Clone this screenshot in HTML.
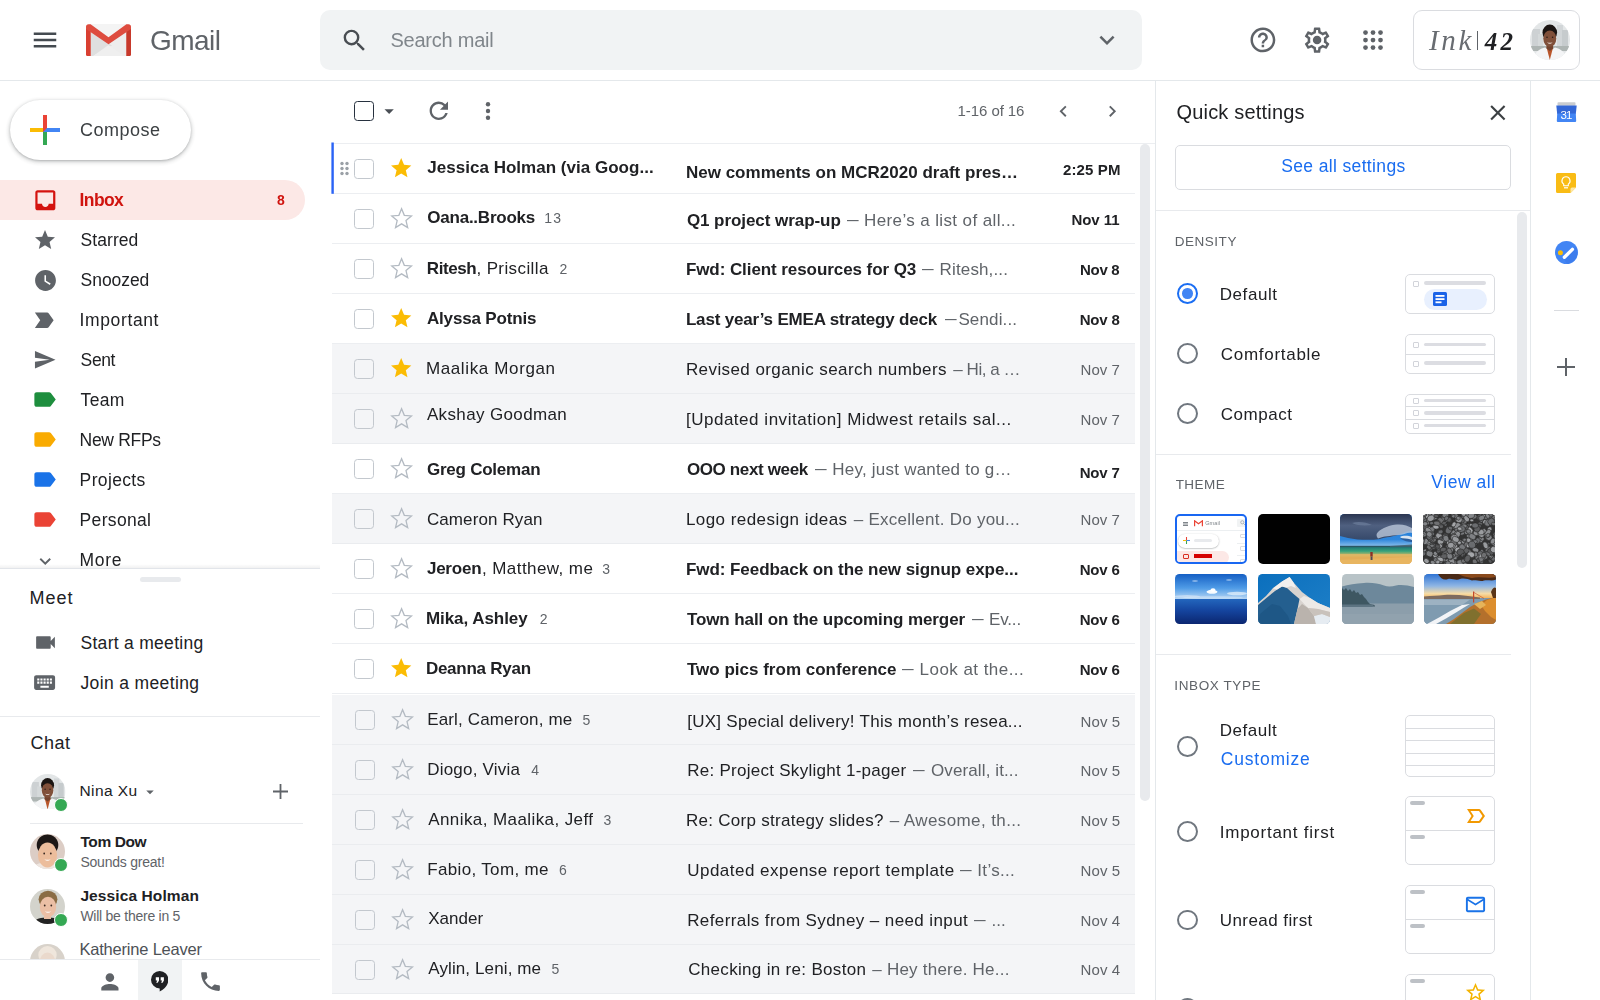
<!DOCTYPE html>
<html lang="en"><head><meta charset="utf-8"><title>Gmail</title>
<style>
*{box-sizing:border-box;margin:0;padding:0}
html,body{width:1600px;height:1000px;overflow:hidden;background:#fff;font-family:"Liberation Sans",sans-serif;}
#app{opacity:.999;position:relative;width:1600px;height:1000px;overflow:hidden}
#app div,#app svg,#app span.t{position:absolute}
#app div span{position:static}
#app>header,#app>nav,#app>main,#app>aside{position:absolute;left:0;top:0;width:0;height:0}
.t{white-space:nowrap;display:block}
</style></head>
<body><div id="app">
<header>
<div style="left:0px;top:80px;width:1600px;height:1px;background:#e4e8eb"></div>
<svg style="left:30px;top:25px" width="30" height="30" viewBox="0 0 24 24" fill="#444a50"><path d="M3 18h18v-2H3v2zm0-5h18v-2H3v2zm0-7v2h18V6H3z"/></svg>
<svg style="left:86.250px;top:23.750px" width="45" height="32.500" viewBox="0 0 45 32.500">
<rect x="1" y=".4" width="43" height="31.700" rx="1.500" fill="#ededed"/>
<path d="M3 .4H42L22.500 13.600z" fill="#f4f4f4"/>
<path d="M4.700 8.200L26 21.500L7 32.100H4.700z" fill="#dfdfdf"/>
<path d="M7 32.100L22.500 21L38 32.100z" fill="#efefef"/>
<path d="M0 3.500H4.750V32.350H2A2 2 0 0 1 0 30.350z" fill="#d93f31"/>
<path d="M45 3.500H40.250V32.350H43A2 2 0 0 0 45 30.350z" fill="#c7392b"/>
<path d="M0 2.800Q0 .2 2.600 .2L4.600 .2L22.500 13.200L40.400 .2L42.400 .2Q45 .2 45 2.800L45 5.100L22.500 20.200L0 5.100z" fill="#de4c3f"/>
</svg>
<span class="t" style="top:27.00px;font-size:28px;line-height:28px;color:#5f6368;letter-spacing:-0.574px;left:150.10px;">Gmail</span>
<div style="left:320px;top:10px;width:822px;height:60px;background:#f1f3f4;border-radius:10px"></div>
<svg style="left:340.35px;top:25.55px" width="29.1" height="29.1" viewBox="0 0 24 24" fill="#494d52"><path d="M15.5 14h-.79l-.28-.27A6.471 6.471 0 0 0 16 9.5 6.5 6.5 0 1 0 9.500 16c1.61 0 3.09-.59 4.23-1.57l.27.28v.79l5 4.99L20.49 19l-4.99-5zm-6 0C7.01 14 5 11.99 5 9.5S7.01 5 9.5 5 14 7.01 14 9.5 11.990 14 9.500 14z"/></svg>
<span class="t" style="top:30.00px;font-size:20px;line-height:20px;color:#80868b;letter-spacing:-0.240px;left:390.50px;">Search mail</span>
<svg style="left:1092px;top:25px" width="30" height="30" viewBox="0 0 24 24" fill="#5f6368"><path d="M16.590 8.590L12 13.170 7.410 8.590 6 10l6 6 6-6z"/></svg>
<svg style="left:1247.5px;top:25.25px" width="29.8" height="29.8" viewBox="0 0 24 24" fill="#5f6368"><path d="M11 18h2v-2h-2v2zm1-16C6.48 2 2 6.48 2 12s4.48 10 10 10 10-4.48 10-10S17.52 2 12 2zm0 18c-4.41 0-8-3.59-8-8s3.59-8 8-8 8 3.59 8 8-3.59 8-8 8zm0-14c-2.21 0-4 1.79-4 4h2c0-1.1.9-2 2-2s2 .9 2 2c0 2-3 1.750-3 5h2c0-2.250 3-2.500 3-5 0-2.210-1.790-4-4-4z"/></svg>
<svg style="left:1302.3px;top:24.8px" width="30.2" height="30.2" viewBox="0 0 24 24" fill="#5f6368"><path d="M19.43 12.98c.04-.32.07-.64.07-.98 0-.34-.03-.66-.07-.98l2.110-1.650c.19-.15.24-.42.12-.64l-2-3.460a.5.5 0 0 0-.61-.22l-2.490 1c-.52-.4-1.080-.73-1.690-.98l-.38-2.650A.488.488 0 0 0 14 2h-4c-.25 0-.46.18-.49.42l-.38 2.650c-.61.25-1.170.59-1.690.98l-2.490-1a.566.566 0 0 0-.18-.03c-.17 0-.34.09-.43.25l-2 3.460c-.13.22-.07.49.12.64l2.110 1.650c-.04.32-.07.65-.07.98 0 .33.03.66.07.98l-2.110 1.650c-.19.15-.24.42-.12.64l2 3.460a.5.5 0 0 0 .61.22l2.490-1c.52.4 1.080.73 1.690.98l.38 2.650c.03.24.24.42.49.42h4c.25 0 .46-.18.49-.42l.38-2.650c.61-.25 1.170-.59 1.690-.98l2.490 1c.06.02.12.03.18.03.17 0 .34-.09.43-.25l2-3.460c.12-.22.07-.49-.12-.64l-2.110-1.650zm-1.980-1.710c.04.31.05.52.05.73 0 .21-.02.43-.05.73l-.14 1.130.89.7 1.080.84-.7 1.210-1.270-.51-1.040-.42-.9.68c-.43.32-.84.56-1.250.73l-1.060.43-.16 1.130-.2 1.350h-1.400l-.19-1.350-.16-1.130-1.060-.43c-.43-.18-.83-.41-1.230-.71l-.91-.7-1.060.43-1.270.51-.7-1.210 1.080-.84.89-.7-.14-1.130c-.03-.31-.05-.54-.05-.74s.02-.43.05-.73l.14-1.130-.89-.7-1.080-.84.7-1.210 1.270.51 1.040.42.9-.68c.43-.32.84-.56 1.250-.73l1.060-.43.16-1.130.2-1.350h1.390l.19 1.350.16 1.130 1.060.43c.43.18.83.41 1.230.71l.91.7 1.060-.43 1.270-.51.7 1.210-1.070.85-.89.7.14 1.130zM12 8.600a3.400 3.400 0 1 0 0 6.800a3.400 3.400 0 1 0 0-6.800z"/></svg>
<svg style="left:1357.500px;top:25px" width="30" height="30" viewBox="0 0 24 24" fill="#5f6368"><circle cx="6" cy="6" r="1.9"/><circle cx="6" cy="12" r="1.9"/><circle cx="6" cy="18" r="1.9"/><circle cx="12" cy="6" r="1.9"/><circle cx="12" cy="12" r="1.9"/><circle cx="12" cy="18" r="1.9"/><circle cx="18" cy="6" r="1.9"/><circle cx="18" cy="12" r="1.9"/><circle cx="18" cy="18" r="1.9"/></svg>
<div style="left:1413px;top:10px;width:167px;height:60px;border:1px solid #dadce0;border-radius:9px;background:#fff"></div>
<span class="t" style="top:26.00px;font-size:29px;line-height:29px;color:#686c71;letter-spacing:2.621px;left:1429.00px;font-family:'Liberation Serif',serif;"><i>Ink</i></span>
<div style="left:1477px;top:31px;width:1px;height:18.5px;background:#5f6368"></div>
<span class="t" style="top:29.00px;font-size:25px;line-height:25px;color:#202124;font-weight:700;letter-spacing:3.200px;left:1484.70px;font-family:'Liberation Serif',serif;"><i>42</i></span>
<svg style="left:1529.9px;top:20.1px" width="40" height="40" viewBox="0 0 40 40"><defs><clipPath id="cn1549"><circle cx="20" cy="20" r="20"/></clipPath></defs>
<g clip-path="url(#cn1549)"><rect width="40" height="40" fill="#e3e6e7"/><rect x="2" y="9" width="8" height="20" fill="#cdd1d3"/><rect x="8" y="14" width="5" height="15" fill="#d5d9da"/><rect x="27" y="5" width="6" height="24" fill="#d2d6d8"/><rect x="32" y="10" width="6" height="19" fill="#c6cbcd"/><rect x="0" y="26" width="40" height="5" fill="#aeb5b3"/>
<path d="M3 41C4 31 11 28.500 15 27.500L20 31L25 27.500C29 28.500 36 31 37 41z" fill="#f4f5f6"/><path d="M16.500 27L19.800 40L23.200 27z" fill="#b9562b"/><path d="M16.500 24h6.600v4.500l-3.300 2.500l-3.300-2.500z" fill="#74432e"/>
<ellipse cx="19.800" cy="12.600" rx="7.300" ry="8" fill="#1b1513"/><ellipse cx="19.800" cy="18.600" rx="6.500" ry="8.200" fill="#80503a"/>
<path d="M17 22.200Q19.800 25.200 22.600 22.200Q19.800 23.200 17 22.200z" fill="#f3e9e4"/><circle cx="17" cy="17.200" r=".8" fill="#2a1a14"/><circle cx="22.600" cy="17.200" r=".8" fill="#2a1a14"/></g></svg>
</header>
<nav>
<div style="left:10px;top:100px;width:181px;height:60px;border-radius:30px;background:#fff;box-shadow:0 1px 2.500px 0 rgba(60,64,67,.3),0 1.500px 4px 1.500px rgba(60,64,67,.15)"></div>
<svg style="left:30px;top:115px" width="30" height="30" viewBox="0 0 30 30"><rect x="13" y="0" width="4" height="15" fill="#ea4335"/><rect x="13" y="15" width="4" height="15" fill="#34a853"/><rect x="0" y="13" width="15" height="4" fill="#fbbc04"/><rect x="15" y="13" width="15" height="4" fill="#4285f4"/><path d="M13 13h4v4h-4z" fill="#4285f4"/><path d="M13 13 L17 13 L13 17z" fill="#ea4335"/></svg>
<span class="t" style="top:121.00px;font-size:18px;line-height:18px;color:#3c4043;letter-spacing:0.496px;left:80.00px;">Compose</span>
<div style="left:0px;top:180px;width:305px;height:40px;background:#fce8e6;border-radius:0 20px 20px 0"></div>
<svg style="left:31.65px;top:186.65px" width="26.7" height="26.7" viewBox="0 0 24 24" fill="#d4130f"><path d="M19 3H4.990c-1.110 0-1.980.89-1.980 2L3 19c0 1.100.88 2 1.990 2H19c1.100 0 2-.9 2-2V5c0-1.110-.9-2-2-2zm0 12h-4c0 1.660-1.350 3-3 3s-3-1.340-3-3H4.990V5H19v10z"/></svg>
<span class="t" style="top:192.00px;font-size:17.5px;line-height:17.5px;color:#d0140f;font-weight:700;letter-spacing:-0.633px;left:79.60px;">Inbox</span>
<span class="t" style="top:193.00px;font-size:14px;line-height:14px;color:#d0140f;font-weight:700;left:277.00px;">8</span>
<svg style="left:33px;top:227.5px" width="24" height="24" viewBox="0 0 24 24" fill="#5f6368"><path d="M12 17.270L18.180 21l-1.640-7.030L22 9.240l-7.190-.61L12 2 9.190 8.630 2 9.240l5.460 4.730L5.820 21z"/></svg>
<span class="t" style="top:232.00px;font-size:17.5px;line-height:17.5px;color:#202124;letter-spacing:0.057px;left:80.60px;">Starred</span>
<svg style="left:32.5px;top:267.5px" width="25" height="25" viewBox="0 0 24 24" fill="#5f6368"><path d="M12 2C6.500 2 2 6.500 2 12s4.500 10 10 10 10-4.500 10-10S17.500 2 12 2zm4.200 14.200L11 13V7h1.500v5.200l4.500 2.700-.8 1.300z"/></svg>
<span class="t" style="top:272.00px;font-size:17.5px;line-height:17.5px;color:#202124;letter-spacing:-0.059px;left:80.60px;">Snoozed</span>
<svg style="left:31.45px;top:306.75px" width="26.5" height="26.5" viewBox="0 0 24 24" fill="#5f6368"><path d="M3.500 18.990l11 .01c.67 0 1.270-.33 1.630-.84L20.500 12l-4.370-6.160c-.36-.51-.96-.84-1.630-.84l-11 .01L8.340 12 3.500 18.990z"/></svg>
<span class="t" style="top:312.00px;font-size:17.5px;line-height:17.5px;color:#202124;letter-spacing:0.617px;left:79.60px;">Important</span>
<svg style="left:32.95px;top:348.25px" width="23.5" height="23.5" viewBox="0 0 24 24" fill="#5f6368"><path d="M2.010 21L23 12 2.010 3 2 10l15 2-15 2z"/></svg>
<span class="t" style="top:352.00px;font-size:17.5px;line-height:17.5px;color:#202124;letter-spacing:-0.379px;left:80.60px;">Sent</span>
<svg style="left:31.200px;top:386.5px" width="27" height="25" viewBox="0 0 24 24" preserveAspectRatio="none" fill="#1e8e3e"><path d="M17.630 5.840C17.270 5.330 16.670 5 16 5L5 5.010C3.900 5.010 3 5.900 3 7v10c0 1.100.9 1.990 2 1.990L16 19c.67 0 1.270-.33 1.630-.84L22 12l-4.370-6.160z"/></svg>
<span class="t" style="top:392.00px;font-size:17.5px;line-height:17.5px;color:#202124;letter-spacing:0.345px;left:80.60px;">Team</span>
<svg style="left:31.200px;top:426.5px" width="27" height="25" viewBox="0 0 24 24" preserveAspectRatio="none" fill="#f9ab00"><path d="M17.630 5.840C17.270 5.330 16.670 5 16 5L5 5.010C3.900 5.010 3 5.900 3 7v10c0 1.100.9 1.990 2 1.990L16 19c.67 0 1.270-.33 1.630-.84L22 12l-4.370-6.160z"/></svg>
<span class="t" style="top:432.00px;font-size:17.5px;line-height:17.5px;color:#202124;letter-spacing:-0.303px;left:79.60px;">New RFPs</span>
<svg style="left:31.200px;top:466.5px" width="27" height="25" viewBox="0 0 24 24" preserveAspectRatio="none" fill="#1a73e8"><path d="M17.630 5.840C17.270 5.330 16.670 5 16 5L5 5.010C3.900 5.010 3 5.900 3 7v10c0 1.100.9 1.990 2 1.990L16 19c.67 0 1.270-.33 1.630-.84L22 12l-4.370-6.160z"/></svg>
<span class="t" style="top:472.00px;font-size:17.5px;line-height:17.5px;color:#202124;letter-spacing:0.362px;left:79.60px;">Projects</span>
<svg style="left:31.200px;top:506.5px" width="27" height="25" viewBox="0 0 24 24" preserveAspectRatio="none" fill="#ea4335"><path d="M17.630 5.840C17.270 5.330 16.670 5 16 5L5 5.010C3.900 5.010 3 5.900 3 7v10c0 1.100.9 1.990 2 1.990L16 19c.67 0 1.270-.33 1.630-.84L22 12l-4.370-6.160z"/></svg>
<span class="t" style="top:512.00px;font-size:17.5px;line-height:17.5px;color:#202124;letter-spacing:0.331px;left:79.60px;">Personal</span>
<svg style="left:34.35px;top:550px" width="22.5" height="22.5" viewBox="0 0 24 24" fill="#5f6368"><path d="M16.590 8.590L12 13.170 7.410 8.590 6 10l6 6 6-6z"/></svg>
<span class="t" style="top:552.00px;font-size:17.5px;line-height:17.5px;color:#202124;letter-spacing:0.704px;left:79.50px;">More</span>
<div style="left:0px;top:564px;width:320px;height:4px;background:linear-gradient(to bottom,rgba(60,64,67,0),rgba(60,64,67,.07))"></div>
<div style="left:0px;top:568px;width:320px;height:432px;background:#fff;border-top:1px solid #e2e5ea"></div>
<div style="left:140px;top:576.5px;width:41px;height:5px;background:#e8eaed;border-radius:2.500px"></div>
<span class="t" style="top:589.00px;font-size:18px;line-height:18px;color:#202124;letter-spacing:0.995px;left:29.50px;">Meet</span>
<svg style="left:32.6px;top:630px" width="25" height="25" viewBox="0 0 24 24" fill="#5f6368"><path d="M17 10.500V7c0-.55-.45-1-1-1H4c-.55 0-1 .45-1 1v10c0 .55.45 1 1 1h12c.55 0 1-.45 1-1v-3.500l4 4v-11l-4 4z"/></svg>
<span class="t" style="top:635.00px;font-size:17.5px;line-height:17.5px;color:#202124;letter-spacing:0.290px;left:80.50px;">Start a meeting</span>
<svg style="left:32.4px;top:669.65px" width="25.2" height="25.2" viewBox="0 0 24 24" fill="#5f6368"><path d="M20 5H4c-1.100 0-1.990.9-1.990 2L2 17c0 1.100.9 2 2 2h16c1.100 0 2-.9 2-2V7c0-1.100-.9-2-2-2zm-9 3h2v2h-2V8zm0 3h2v2h-2v-2zM8 8h2v2H8V8zm0 3h2v2H8v-2zm-1 2H5v-2h2v2zm0-3H5V8h2v2zm9 7H8v-2h8v2zm0-4h-2v-2h2v2zm0-3h-2V8h2v2zm3 3h-2v-2h2v2zm0-3h-2V8h2v2z"/></svg>
<span class="t" style="top:675.00px;font-size:17.5px;line-height:17.5px;color:#202124;letter-spacing:0.359px;left:80.50px;">Join a meeting</span>
<div style="left:0px;top:716px;width:320px;height:1px;background:#e8eaed"></div>
<span class="t" style="top:734.00px;font-size:18px;line-height:18px;color:#202124;letter-spacing:0.493px;left:30.50px;">Chat</span>
<svg style="left:30.0px;top:773.75px" width="35.5" height="35.5" viewBox="0 0 40 40"><defs><clipPath id="cn47"><circle cx="20" cy="20" r="20"/></clipPath></defs>
<g clip-path="url(#cn47)"><rect width="40" height="40" fill="#e3e6e7"/><rect x="2" y="9" width="8" height="20" fill="#cdd1d3"/><rect x="8" y="14" width="5" height="15" fill="#d5d9da"/><rect x="27" y="5" width="6" height="24" fill="#d2d6d8"/><rect x="32" y="10" width="6" height="19" fill="#c6cbcd"/><rect x="0" y="26" width="40" height="5" fill="#aeb5b3"/>
<path d="M3 41C4 31 11 28.500 15 27.500L20 31L25 27.500C29 28.500 36 31 37 41z" fill="#f4f5f6"/><path d="M16.500 27L19.800 40L23.200 27z" fill="#b9562b"/><path d="M16.500 24h6.600v4.500l-3.300 2.500l-3.300-2.500z" fill="#74432e"/>
<ellipse cx="19.800" cy="12.600" rx="7.300" ry="8" fill="#1b1513"/><ellipse cx="19.800" cy="18.600" rx="6.500" ry="8.200" fill="#80503a"/>
<path d="M17 22.200Q19.800 25.200 22.600 22.200Q19.800 23.200 17 22.200z" fill="#f3e9e4"/><circle cx="17" cy="17.200" r=".8" fill="#2a1a14"/><circle cx="22.600" cy="17.200" r=".8" fill="#2a1a14"/></g></svg>
<div style="left:54.2px;top:798px;width:14px;height:14px;border-radius:50%;background:#34a853;border:1px solid #fff"></div>
<span class="t" style="top:783.00px;font-size:15.5px;line-height:15.5px;color:#202124;letter-spacing:0.413px;left:79.50px;">Nina Xu</span>
<svg style="left:141px;top:782.5px" width="18" height="18" viewBox="0 0 24 24" fill="#5f6368"><path d="M7 10l5 5 5-5z"/></svg>
<svg style="left:272.500px;top:784px" width="15" height="15" viewBox="0 0 15 15"><path d="M6.600 0h1.800v6.600H15v1.800H8.400V15H6.600V8.400H0V6.600h6.600z" fill="#5f6368"/></svg>
<div style="left:30px;top:822.5px;width:272.5px;height:1px;background:#e8eaed"></div>
<svg style="left:30.0px;top:833.6px" width="35.0" height="35.0" viewBox="0 0 35 35"><defs><clipPath id="avT"><circle cx="17.500" cy="17.500" r="17.500"/></clipPath></defs>
<g clip-path="url(#avT)"><rect width="35" height="35" fill="#dccdc5"/><path d="M2 37C4 29 11 28.500 17.500 28.500C24 28.500 31 29 33 37z" fill="#efe6e0"/><rect x="14" y="24" width="7" height="6" fill="#ecbd9c"/>
<ellipse cx="17.5" cy="11.0" rx="10.799999999999999" ry="10.625" fill="#1c1715"/><ellipse cx="17.5" cy="21" rx="9.6" ry="12.5" fill="#ecbd9c"/>
<circle cx="14.2" cy="19.5" r=".9" fill="#3a2a22"/><circle cx="20.8" cy="19.5" r=".9" fill="#3a2a22"/><path d="M14.3 25.2Q17.5 28.5 20.7 25.2Q17.5 26.5 14.3 25.2z" fill="#fff"/></g></svg>
<div style="left:54.2px;top:858px;width:14px;height:14px;border-radius:50%;background:#34a853;border:1px solid #fff"></div>
<span class="t" style="top:834.00px;font-size:15.5px;line-height:15.5px;color:#202124;font-weight:700;letter-spacing:-0.389px;left:80.40px;">Tom Dow</span>
<span class="t" style="top:855.00px;font-size:14px;line-height:14px;color:#5f6368;letter-spacing:-0.224px;left:80.40px;">Sounds great!</span>
<svg style="left:30.0px;top:889.0px" width="35.0" height="35.0" viewBox="0 0 35 35"><defs><clipPath id="avJ"><circle cx="17.500" cy="17.500" r="17.500"/></clipPath></defs>
<g clip-path="url(#avJ)"><rect width="35" height="35" fill="#d3d3cc"/><path d="M2 37C4 29 11 28.500 17.500 28.500C24 28.500 31 29 33 37z" fill="#232323"/><rect x="14" y="24" width="7" height="6" fill="#ebbfa5"/>
<ellipse cx="18" cy="10.3" rx="9.399999999999999" ry="8.67" fill="#8a6c44"/><ellipse cx="18" cy="18" rx="8.2" ry="10.2" fill="#ebbfa5"/>
<circle cx="14.7" cy="16.5" r=".9" fill="#3a2a22"/><circle cx="21.3" cy="16.5" r=".9" fill="#3a2a22"/><path d="M14.8 22.2Q18 25.5 21.2 22.2Q18 23.5 14.8 22.2z" fill="#fff"/></g></svg>
<div style="left:54.2px;top:912.8px;width:14px;height:14px;border-radius:50%;background:#34a853;border:1px solid #fff"></div>
<span class="t" style="top:888.00px;font-size:15.5px;line-height:15.5px;color:#202124;font-weight:700;letter-spacing:0.100px;left:80.40px;">Jessica Holman</span>
<span class="t" style="top:909.00px;font-size:14px;line-height:14px;color:#5f6368;letter-spacing:-0.252px;left:80.40px;">Will be there in 5</span>
<svg style="left:30.0px;top:944.0px" width="35.0" height="35.0" viewBox="0 0 35 35"><defs><clipPath id="avK"><circle cx="17.500" cy="17.500" r="17.500"/></clipPath></defs>
<g clip-path="url(#avK)"><rect width="35" height="35" fill="#d8d2ca"/><path d="M2 37C4 29 11 28.500 17.500 28.500C24 28.500 31 29 33 37z" fill="#d8d4cf"/><rect x="14" y="24" width="7" height="6" fill="#ead9cc"/>
<ellipse cx="17.5" cy="11.0" rx="9.2" ry="8.924999999999999" fill="#efe6dc"/><ellipse cx="17.5" cy="19" rx="8" ry="10.5" fill="#ead9cc"/>
<circle cx="14.2" cy="17.5" r=".9" fill="#3a2a22"/><circle cx="20.8" cy="17.5" r=".9" fill="#3a2a22"/><path d="M14.3 23.2Q17.5 26.5 20.7 23.2Q17.5 24.5 14.3 23.2z" fill="#fff"/></g></svg>
<span class="t" style="top:941.00px;font-size:16.5px;line-height:16.5px;color:#4d5156;letter-spacing:-0.198px;left:79.40px;">Katherine Leaver</span>
<div style="left:0px;top:959px;width:320px;height:41px;background:#fff;border-top:1px solid #e8eaed"></div>
<div style="left:137.6px;top:960px;width:44.4px;height:40px;background:#f1f3f4"></div>
<svg style="left:97.1px;top:968.6px" width="25.8" height="25.8" viewBox="0 0 24 24" fill="#5f6368"><path d="M12 12c2.210 0 4-1.790 4-4s-1.790-4-4-4-4 1.790-4 4 1.790 4 4 4zm0 2c-2.670 0-8 1.340-8 4v2h16v-2c0-2.660-5.330-4-8-4z"/></svg>
<svg style="left:151px;top:971.400px" width="17.400" height="20.600" viewBox="0 0 17.400 20.600"><path d="M8.700 0A8.700 8.700 0 0 0 0 8.700A8.700 8.700 0 0 0 8.700 17.400L8.700 20.600C13 18.600 17.400 14.500 17.400 8.700A8.700 8.700 0 0 0 8.700 0z" fill="#202124"/><path d="M4.800 6.200h3.200v3.200l-1.300 2.400h-1.500l1.100-2.400h-1.500z M9.700 6.200h3.200v3.200l-1.300 2.400h-1.500l1.100-2.400h-1.500z" fill="#fff"/></svg>
<svg style="left:197.5px;top:968.8px" width="25" height="25" viewBox="0 0 24 24" fill="#5f6368"><path d="M6.620 10.790c1.440 2.830 3.760 5.140 6.590 6.590l2.200-2.200c.27-.27.67-.36 1.020-.24 1.120.37 2.330.57 3.570.57.55 0 1 .45 1 1V20c0 .55-.45 1-1 1-9.390 0-17-7.610-17-17 0-.55.45-1 1-1h3.500c.55 0 1 .45 1 1 0 1.250.2 2.450.57 3.570.11.35.03.74-.25 1.020l-2.200 2.200z"/></svg>
</nav>
<main>
<div style="left:353.8px;top:101px;width:20px;height:20px;border:1.8px solid #27313f;border-radius:3.500px"></div>
<svg style="left:377.75px;top:100.1px" width="22.3" height="22.3" viewBox="0 0 24 24" fill="#4a4f55"><path d="M7 10l5 5 5-5z"/></svg>
<svg style="left:425.2px;top:97.45px" width="27.6" height="27.6" viewBox="0 0 24 24" fill="#5f6368"><path d="M17.65 6.35A7.958 7.958 0 0 0 12 4c-4.42 0-7.990 3.580-7.990 8s3.570 8 7.990 8c3.730 0 6.840-2.550 7.730-6h-2.080A5.990 5.990 0 0 1 12 18c-3.310 0-6-2.690-6-6s2.690-6 6-6c1.660 0 3.140.69 4.220 1.780L13 11h7V4l-2.350 2.350z"/></svg>
<svg style="left:476px;top:99.250px" width="24" height="24" viewBox="0 0 24 24" fill="#5f6368"><circle cx="12" cy="5.200" r="2.200"/><circle cx="12" cy="12" r="2.200"/><circle cx="12" cy="18.800" r="2.200"/></svg>
<span class="t" style="top:103.00px;font-size:15px;line-height:15px;color:#5f6368;letter-spacing:-0.079px;left:957.60px;">1-16 of 16</span>
<svg style="left:1051.6px;top:99.95px" width="22.6" height="22.6" viewBox="0 0 24 24" fill="#5f6368"><path d="M15.41 7.41L14 6l-6 6 6 6 1.410-1.410L10.830 12z"/></svg>
<svg style="left:1100.9px;top:99.95px" width="22.6" height="22.6" viewBox="0 0 24 24" fill="#5f6368"><path d="M10 6L8.590 7.410 13.170 12l-4.580 4.590L10 18l6-6z"/></svg>
<div style="left:1140px;top:144px;width:10px;height:657px;background:#e8eaed;border-radius:5px"></div>
<div style="left:332px;top:344px;width:803px;height:50px;background:#f4f5f7"></div>
<div style="left:332px;top:394px;width:803px;height:50px;background:#f4f5f7"></div>
<div style="left:332px;top:494px;width:803px;height:50px;background:#f4f5f7"></div>
<div style="left:332px;top:695px;width:803px;height:50px;background:#f4f5f7"></div>
<div style="left:332px;top:745px;width:803px;height:50px;background:#f4f5f7"></div>
<div style="left:332px;top:795px;width:803px;height:50px;background:#f4f5f7"></div>
<div style="left:332px;top:845px;width:803px;height:50px;background:#f4f5f7"></div>
<div style="left:332px;top:895px;width:803px;height:50px;background:#f4f5f7"></div>
<div style="left:332px;top:945px;width:803px;height:49px;background:#f4f5f7"></div>
<div style="left:332px;top:193px;width:803px;height:1px;background:#eceef1"></div>
<div style="left:332px;top:243px;width:803px;height:1px;background:#eceef1"></div>
<div style="left:332px;top:293px;width:803px;height:1px;background:#eceef1"></div>
<div style="left:332px;top:343px;width:803px;height:1px;background:#eceef1"></div>
<div style="left:332px;top:393px;width:803px;height:1px;background:#eaecef"></div>
<div style="left:332px;top:443px;width:803px;height:1px;background:#eaecef"></div>
<div style="left:332px;top:493px;width:803px;height:1px;background:#eceef1"></div>
<div style="left:332px;top:543px;width:803px;height:1px;background:#eaecef"></div>
<div style="left:332px;top:593px;width:803px;height:1px;background:#eceef1"></div>
<div style="left:332px;top:643px;width:803px;height:1px;background:#eceef1"></div>
<div style="left:332px;top:693px;width:803px;height:1px;background:#eceef1"></div>
<div style="left:332px;top:744px;width:803px;height:1px;background:#eaecef"></div>
<div style="left:332px;top:794px;width:803px;height:1px;background:#eaecef"></div>
<div style="left:332px;top:844px;width:803px;height:1px;background:#eaecef"></div>
<div style="left:332px;top:894px;width:803px;height:1px;background:#eaecef"></div>
<div style="left:332px;top:944px;width:803px;height:1px;background:#eaecef"></div>
<div style="left:332px;top:993px;width:803px;height:1px;background:#eaecef"></div>
<div style="left:332px;top:143px;width:823px;height:1px;background:#eceef1"></div>
<svg style="left:331px;top:142px" width="4" height="53" viewBox="0 0 4 53"><rect x=".4" y=".5" width="2.400" height="51.300" fill="#2a63f6"/></svg>
<svg style="left:339px;top:160px" width="11" height="17" viewBox="0 0 11 17" fill="#9aa0a6"><circle cx="3" cy="3.5" r="1.700"/><circle cx="3" cy="8.5" r="1.700"/><circle cx="3" cy="13.5" r="1.700"/><circle cx="8" cy="3.5" r="1.700"/><circle cx="8" cy="8.5" r="1.700"/><circle cx="8" cy="13.5" r="1.700"/></svg>
<div style="left:353.8px;top:158.75px;width:20px;height:20px;border:1.7px solid #c3c8ce;border-radius:3.500px"></div>
<svg style="left:389.05px;top:156.2px" width="24.4" height="24.4" viewBox="0 0 24 24" fill="#fbbc04"><path d="M12 17.270L18.180 21l-1.640-7.030L22 9.240l-7.190-.61L12 2 9.190 8.630 2 9.240l5.460 4.730L5.820 21z"/></svg>
<span class="t" style="top:159.00px;font-size:17px;line-height:17px;color:#202124;font-weight:700;letter-spacing:0.018px;left:427.35px;">Jessica Holman (via Goog...</span>
<span class="t" style="top:164.00px;font-size:17px;line-height:17px;color:#202124;font-weight:700;letter-spacing:0.015px;left:685.90px;">New comments on MCR2020 draft pres…</span>
<span class="t" style="top:162.00px;font-size:15px;line-height:15px;color:#202124;font-weight:700;letter-spacing:0.134px;left:1063.00px;">2:25 PM</span>
<div style="left:353.8px;top:208.75px;width:20px;height:20px;border:1.7px solid #c3c8ce;border-radius:3.500px"></div>
<svg style="left:387.79999999999995px;top:204.70000000000002px" width="27.200" height="27.200" viewBox="0 0 24 24"><path d="M12 3.300L14.400 9.100L20.700 9.650L15.900 13.750L17.350 19.900L12 16.650L6.650 19.900L8.100 13.750L3.300 9.650L9.600 9.100z" fill="none" stroke="#b3bac2" stroke-width="1.150" stroke-linejoin="miter"/></svg>
<span class="t" style="top:209.00px;font-size:17px;line-height:17px;color:#202124;font-weight:700;letter-spacing:-0.244px;left:427.35px;">Oana..Brooks</span>
<span class="t" style="top:211.00px;font-size:14px;line-height:14px;color:#5f6368;letter-spacing:1.214px;left:544.30px;">13</span>
<span class="t" style="top:212.00px;font-size:17px;line-height:17px;color:#202124;font-weight:700;letter-spacing:-0.060px;left:686.90px;">Q1 project wrap-up</span>
<span class="t" style="top:211.00px;font-size:17px;line-height:17px;color:#5f6368;left:846.80px;transform:scaleX(0.682);transform-origin:0 50%;">—</span>
<span class="t" style="top:212.00px;font-size:17px;line-height:17px;color:#5f6368;letter-spacing:0.383px;left:864.00px;">Here’s a list of all...</span>
<span class="t" style="top:212.00px;font-size:15px;line-height:15px;color:#202124;font-weight:700;letter-spacing:-0.064px;left:1071.50px;">Nov 11</span>
<div style="left:353.8px;top:258.75px;width:20px;height:20px;border:1.7px solid #c3c8ce;border-radius:3.500px"></div>
<svg style="left:387.79999999999995px;top:254.70000000000002px" width="27.200" height="27.200" viewBox="0 0 24 24"><path d="M12 3.300L14.400 9.100L20.700 9.650L15.900 13.750L17.350 19.900L12 16.650L6.650 19.900L8.100 13.750L3.300 9.650L9.600 9.100z" fill="none" stroke="#b3bac2" stroke-width="1.150" stroke-linejoin="miter"/></svg>
<span class="t" style="top:260.00px;font-size:17px;line-height:17px;color:#202124;font-weight:700;letter-spacing:-0.424px;left:426.80px;">Ritesh</span>
<span class="t" style="top:260.00px;font-size:17px;line-height:17px;color:#202124;letter-spacing:0.395px;left:476.40px;">, Priscilla</span>
<span class="t" style="top:262.00px;font-size:14px;line-height:14px;color:#5f6368;left:559.50px;">2</span>
<span class="t" style="top:261.00px;font-size:17px;line-height:17px;color:#202124;font-weight:700;letter-spacing:-0.075px;left:685.90px;">Fwd: Client resources for Q3</span>
<span class="t" style="top:260.00px;font-size:17px;line-height:17px;color:#5f6368;left:922.40px;transform:scaleX(0.682);transform-origin:0 50%;">—</span>
<span class="t" style="top:261.00px;font-size:17px;line-height:17px;color:#5f6368;letter-spacing:0.138px;left:939.60px;">Ritesh,...</span>
<span class="t" style="top:262.00px;font-size:15px;line-height:15px;color:#202124;font-weight:700;letter-spacing:-0.301px;left:1080.00px;">Nov 8</span>
<div style="left:353.8px;top:308.75px;width:20px;height:20px;border:1.7px solid #c3c8ce;border-radius:3.500px"></div>
<svg style="left:389.05px;top:306.2px" width="24.4" height="24.4" viewBox="0 0 24 24" fill="#fbbc04"><path d="M12 17.270L18.180 21l-1.640-7.030L22 9.240l-7.190-.61L12 2 9.190 8.630 2 9.240l5.460 4.730L5.820 21z"/></svg>
<span class="t" style="top:310.00px;font-size:17px;line-height:17px;color:#202124;font-weight:700;letter-spacing:-0.153px;left:426.90px;">Alyssa Potnis</span>
<span class="t" style="top:311.00px;font-size:17px;line-height:17px;color:#202124;font-weight:700;letter-spacing:-0.171px;left:685.90px;">Last year’s EMEA strategy deck</span>
<span class="t" style="top:310.00px;font-size:17px;line-height:17px;color:#5f6368;left:944.80px;transform:scaleX(0.682);transform-origin:0 50%;">—</span>
<span class="t" style="top:311.00px;font-size:17px;line-height:17px;color:#5f6368;letter-spacing:0.139px;left:958.40px;">Sendi...</span>
<span class="t" style="top:312.00px;font-size:15px;line-height:15px;color:#202124;font-weight:700;letter-spacing:-0.201px;left:1079.70px;">Nov 8</span>
<div style="left:353.8px;top:358.75px;width:20px;height:20px;border:1.7px solid #c3c8ce;border-radius:3.500px"></div>
<svg style="left:389.05px;top:356.2px" width="24.4" height="24.4" viewBox="0 0 24 24" fill="#fbbc04"><path d="M12 17.270L18.180 21l-1.640-7.030L22 9.240l-7.190-.61L12 2 9.190 8.630 2 9.240l5.460 4.730L5.820 21z"/></svg>
<span class="t" style="top:360.00px;font-size:17px;line-height:17px;color:#202124;letter-spacing:0.632px;left:425.90px;">Maalika Morgan</span>
<span class="t" style="top:361.00px;font-size:17px;line-height:17px;color:#202124;letter-spacing:0.420px;left:685.90px;">Revised organic search numbers</span>
<span class="t" style="top:361.00px;font-size:17px;line-height:17px;color:#5f6368;letter-spacing:-0.444px;left:953.30px;">– Hi, a …</span>
<span class="t" style="top:362.00px;font-size:15px;line-height:15px;color:#5f6368;letter-spacing:-0.011px;left:1080.60px;">Nov 7</span>
<div style="left:353.8px;top:408.75px;width:20px;height:20px;border:1.7px solid #c3c8ce;border-radius:3.500px"></div>
<svg style="left:387.79999999999995px;top:404.7px" width="27.200" height="27.200" viewBox="0 0 24 24"><path d="M12 3.300L14.400 9.100L20.700 9.650L15.900 13.750L17.350 19.900L12 16.650L6.650 19.900L8.100 13.750L3.300 9.650L9.600 9.100z" fill="none" stroke="#b3bac2" stroke-width="1.150" stroke-linejoin="miter"/></svg>
<span class="t" style="top:406.00px;font-size:17px;line-height:17px;color:#202124;letter-spacing:0.364px;left:426.90px;">Akshay Goodman</span>
<span class="t" style="top:411.00px;font-size:17px;line-height:17px;color:#202124;letter-spacing:0.524px;left:685.90px;">[Updated invitation] Midwest retails sal...</span>
<span class="t" style="top:412.00px;font-size:15px;line-height:15px;color:#5f6368;letter-spacing:-0.011px;left:1080.60px;">Nov 7</span>
<div style="left:353.8px;top:458.75px;width:20px;height:20px;border:1.7px solid #c3c8ce;border-radius:3.500px"></div>
<svg style="left:387.79999999999995px;top:454.7px" width="27.200" height="27.200" viewBox="0 0 24 24"><path d="M12 3.300L14.400 9.100L20.700 9.650L15.900 13.750L17.350 19.900L12 16.650L6.650 19.900L8.100 13.750L3.300 9.650L9.600 9.100z" fill="none" stroke="#b3bac2" stroke-width="1.150" stroke-linejoin="miter"/></svg>
<span class="t" style="top:461.00px;font-size:17px;line-height:17px;color:#202124;font-weight:700;letter-spacing:-0.228px;left:426.90px;">Greg Coleman</span>
<span class="t" style="top:461.00px;font-size:17px;line-height:17px;color:#202124;font-weight:700;letter-spacing:-0.359px;left:686.90px;">OOO next week</span>
<span class="t" style="top:460.00px;font-size:17px;line-height:17px;color:#5f6368;left:815.10px;transform:scaleX(0.682);transform-origin:0 50%;">—</span>
<span class="t" style="top:461.00px;font-size:17px;line-height:17px;color:#5f6368;letter-spacing:0.224px;left:832.30px;">Hey, just wanted to g…</span>
<span class="t" style="top:465.00px;font-size:15px;line-height:15px;color:#202124;font-weight:700;letter-spacing:-0.201px;left:1079.70px;">Nov 7</span>
<div style="left:353.8px;top:508.75px;width:20px;height:20px;border:1.7px solid #c3c8ce;border-radius:3.500px"></div>
<svg style="left:387.79999999999995px;top:504.69999999999993px" width="27.200" height="27.200" viewBox="0 0 24 24"><path d="M12 3.300L14.400 9.100L20.700 9.650L15.900 13.750L17.350 19.900L12 16.650L6.650 19.900L8.100 13.750L3.300 9.650L9.600 9.100z" fill="none" stroke="#b3bac2" stroke-width="1.150" stroke-linejoin="miter"/></svg>
<span class="t" style="top:511.00px;font-size:17px;line-height:17px;color:#202124;letter-spacing:0.112px;left:426.90px;">Cameron Ryan</span>
<span class="t" style="top:511.00px;font-size:17px;line-height:17px;color:#202124;letter-spacing:0.449px;left:685.90px;">Logo redesign ideas</span>
<span class="t" style="top:511.00px;font-size:17px;line-height:17px;color:#5f6368;letter-spacing:0.252px;left:853.80px;">– Excellent. Do you...</span>
<span class="t" style="top:512.00px;font-size:15px;line-height:15px;color:#5f6368;letter-spacing:-0.011px;left:1080.60px;">Nov 7</span>
<div style="left:353.8px;top:558.75px;width:20px;height:20px;border:1.7px solid #c3c8ce;border-radius:3.500px"></div>
<svg style="left:387.79999999999995px;top:554.6999999999999px" width="27.200" height="27.200" viewBox="0 0 24 24"><path d="M12 3.300L14.400 9.100L20.700 9.650L15.900 13.750L17.350 19.900L12 16.650L6.650 19.900L8.100 13.750L3.300 9.650L9.600 9.100z" fill="none" stroke="#b3bac2" stroke-width="1.150" stroke-linejoin="miter"/></svg>
<span class="t" style="top:560.00px;font-size:17px;line-height:17px;color:#202124;font-weight:700;letter-spacing:-0.213px;left:426.90px;">Jeroen</span>
<span class="t" style="top:560.00px;font-size:17px;line-height:17px;color:#202124;letter-spacing:0.420px;left:482.00px;">, Matthew, me</span>
<span class="t" style="top:562.00px;font-size:14px;line-height:14px;color:#5f6368;left:602.30px;">3</span>
<span class="t" style="top:561.00px;font-size:17px;line-height:17px;color:#202124;font-weight:700;letter-spacing:-0.049px;left:685.90px;">Fwd: Feedback on the new signup expe...</span>
<span class="t" style="top:562.00px;font-size:15px;line-height:15px;color:#202124;font-weight:700;letter-spacing:-0.201px;left:1079.70px;">Nov 6</span>
<div style="left:353.8px;top:608.75px;width:20px;height:20px;border:1.7px solid #c3c8ce;border-radius:3.500px"></div>
<svg style="left:387.79999999999995px;top:604.6999999999999px" width="27.200" height="27.200" viewBox="0 0 24 24"><path d="M12 3.300L14.400 9.100L20.700 9.650L15.900 13.750L17.350 19.900L12 16.650L6.650 19.900L8.100 13.750L3.300 9.650L9.600 9.100z" fill="none" stroke="#b3bac2" stroke-width="1.150" stroke-linejoin="miter"/></svg>
<span class="t" style="top:610.00px;font-size:17px;line-height:17px;color:#202124;font-weight:700;letter-spacing:-0.048px;left:425.90px;">Mika, Ashley</span>
<span class="t" style="top:612.00px;font-size:14px;line-height:14px;color:#5f6368;left:539.70px;">2</span>
<span class="t" style="top:611.00px;font-size:17px;line-height:17px;color:#202124;font-weight:700;letter-spacing:-0.094px;left:686.90px;">Town hall on the upcoming merger</span>
<span class="t" style="top:610.00px;font-size:17px;line-height:17px;color:#5f6368;left:971.80px;transform:scaleX(0.682);transform-origin:0 50%;">—</span>
<span class="t" style="top:611.00px;font-size:17px;line-height:17px;color:#5f6368;letter-spacing:-0.156px;left:989.00px;">Ev...</span>
<span class="t" style="top:612.00px;font-size:15px;line-height:15px;color:#202124;font-weight:700;letter-spacing:-0.201px;left:1079.70px;">Nov 6</span>
<div style="left:353.8px;top:658.75px;width:20px;height:20px;border:1.7px solid #c3c8ce;border-radius:3.500px"></div>
<svg style="left:389.05px;top:656.2px" width="24.4" height="24.4" viewBox="0 0 24 24" fill="#fbbc04"><path d="M12 17.270L18.180 21l-1.640-7.030L22 9.240l-7.190-.61L12 2 9.190 8.630 2 9.240l5.460 4.730L5.820 21z"/></svg>
<span class="t" style="top:660.00px;font-size:17px;line-height:17px;color:#202124;font-weight:700;letter-spacing:-0.252px;left:425.90px;">Deanna Ryan</span>
<span class="t" style="top:661.00px;font-size:17px;line-height:17px;color:#202124;font-weight:700;letter-spacing:0.011px;left:686.90px;">Two pics from conference</span>
<span class="t" style="top:660.00px;font-size:17px;line-height:17px;color:#5f6368;left:902.40px;transform:scaleX(0.682);transform-origin:0 50%;">—</span>
<span class="t" style="top:661.00px;font-size:17px;line-height:17px;color:#5f6368;letter-spacing:0.449px;left:919.60px;">Look at the...</span>
<span class="t" style="top:662.00px;font-size:15px;line-height:15px;color:#202124;font-weight:700;letter-spacing:-0.201px;left:1079.70px;">Nov 6</span>
<div style="left:354.8px;top:710.25px;width:20px;height:20px;border:1.7px solid #c3c8ce;border-radius:3.500px"></div>
<svg style="left:388.79999999999995px;top:706.1999999999999px" width="27.200" height="27.200" viewBox="0 0 24 24"><path d="M12 3.300L14.400 9.100L20.700 9.650L15.900 13.750L17.350 19.900L12 16.650L6.650 19.900L8.100 13.750L3.300 9.650L9.600 9.100z" fill="none" stroke="#b3bac2" stroke-width="1.150" stroke-linejoin="miter"/></svg>
<span class="t" style="top:711.00px;font-size:17px;line-height:17px;color:#202124;letter-spacing:0.140px;left:427.25px;">Earl, Cameron, me</span>
<span class="t" style="top:713.00px;font-size:14px;line-height:14px;color:#5f6368;left:582.50px;">5</span>
<span class="t" style="top:713.00px;font-size:17px;line-height:17px;color:#202124;letter-spacing:0.278px;left:687.20px;">[UX] Special delivery! This month’s resea...</span>
<span class="t" style="top:714.00px;font-size:15px;line-height:15px;color:#5f6368;letter-spacing:0.089px;left:1080.60px;">Nov 5</span>
<div style="left:354.8px;top:760.25px;width:20px;height:20px;border:1.7px solid #c3c8ce;border-radius:3.500px"></div>
<svg style="left:388.79999999999995px;top:756.1999999999999px" width="27.200" height="27.200" viewBox="0 0 24 24"><path d="M12 3.300L14.400 9.100L20.700 9.650L15.900 13.750L17.350 19.900L12 16.650L6.650 19.900L8.100 13.750L3.300 9.650L9.600 9.100z" fill="none" stroke="#b3bac2" stroke-width="1.150" stroke-linejoin="miter"/></svg>
<span class="t" style="top:761.00px;font-size:17px;line-height:17px;color:#202124;letter-spacing:0.200px;left:427.25px;">Diogo, Vivia</span>
<span class="t" style="top:763.00px;font-size:14px;line-height:14px;color:#5f6368;left:531.20px;">4</span>
<span class="t" style="top:762.00px;font-size:17px;line-height:17px;color:#202124;letter-spacing:0.271px;left:687.20px;">Re: Project Skylight 1-pager</span>
<span class="t" style="top:761.00px;font-size:17px;line-height:17px;color:#5f6368;left:913.20px;transform:scaleX(0.682);transform-origin:0 50%;">—</span>
<span class="t" style="top:762.00px;font-size:17px;line-height:17px;color:#5f6368;letter-spacing:0.112px;left:931.00px;">Overall, it...</span>
<span class="t" style="top:763.00px;font-size:15px;line-height:15px;color:#5f6368;letter-spacing:0.089px;left:1080.60px;">Nov 5</span>
<div style="left:354.8px;top:810.25px;width:20px;height:20px;border:1.7px solid #c3c8ce;border-radius:3.500px"></div>
<svg style="left:388.79999999999995px;top:806.1999999999999px" width="27.200" height="27.200" viewBox="0 0 24 24"><path d="M12 3.300L14.400 9.100L20.700 9.650L15.900 13.750L17.350 19.900L12 16.650L6.650 19.900L8.100 13.750L3.300 9.650L9.600 9.100z" fill="none" stroke="#b3bac2" stroke-width="1.150" stroke-linejoin="miter"/></svg>
<span class="t" style="top:811.00px;font-size:17px;line-height:17px;color:#202124;letter-spacing:0.411px;left:428.25px;">Annika, Maalika, Jeff</span>
<span class="t" style="top:813.00px;font-size:14px;line-height:14px;color:#5f6368;left:603.60px;">3</span>
<span class="t" style="top:812.00px;font-size:17px;line-height:17px;color:#202124;letter-spacing:0.283px;left:685.90px;">Re: Corp strategy slides?</span>
<span class="t" style="top:812.00px;font-size:17px;line-height:17px;color:#5f6368;letter-spacing:0.395px;left:889.80px;">– Awesome, th...</span>
<span class="t" style="top:813.00px;font-size:15px;line-height:15px;color:#5f6368;letter-spacing:0.089px;left:1080.60px;">Nov 5</span>
<div style="left:354.8px;top:860.05px;width:20px;height:20px;border:1.7px solid #c3c8ce;border-radius:3.500px"></div>
<svg style="left:388.79999999999995px;top:855.9999999999999px" width="27.200" height="27.200" viewBox="0 0 24 24"><path d="M12 3.300L14.400 9.100L20.700 9.650L15.900 13.750L17.350 19.900L12 16.650L6.650 19.900L8.100 13.750L3.300 9.650L9.600 9.100z" fill="none" stroke="#b3bac2" stroke-width="1.150" stroke-linejoin="miter"/></svg>
<span class="t" style="top:861.00px;font-size:17px;line-height:17px;color:#202124;letter-spacing:0.335px;left:427.25px;">Fabio, Tom, me</span>
<span class="t" style="top:863.00px;font-size:14px;line-height:14px;color:#5f6368;left:559.10px;">6</span>
<span class="t" style="top:862.00px;font-size:17px;line-height:17px;color:#202124;letter-spacing:0.488px;left:687.20px;">Updated expense report template</span>
<span class="t" style="top:861.00px;font-size:17px;line-height:17px;color:#5f6368;left:960.00px;transform:scaleX(0.682);transform-origin:0 50%;">—</span>
<span class="t" style="top:862.00px;font-size:17px;line-height:17px;color:#5f6368;letter-spacing:0.298px;left:977.35px;">It’s...</span>
<span class="t" style="top:863.00px;font-size:15px;line-height:15px;color:#5f6368;letter-spacing:0.089px;left:1080.60px;">Nov 5</span>
<div style="left:354.8px;top:910.05px;width:20px;height:20px;border:1.7px solid #c3c8ce;border-radius:3.500px"></div>
<svg style="left:388.79999999999995px;top:905.9999999999999px" width="27.200" height="27.200" viewBox="0 0 24 24"><path d="M12 3.300L14.400 9.100L20.700 9.650L15.900 13.750L17.350 19.900L12 16.650L6.650 19.900L8.100 13.750L3.300 9.650L9.600 9.100z" fill="none" stroke="#b3bac2" stroke-width="1.150" stroke-linejoin="miter"/></svg>
<span class="t" style="top:910.00px;font-size:17px;line-height:17px;color:#202124;letter-spacing:0.019px;left:428.25px;">Xander</span>
<span class="t" style="top:912.00px;font-size:17px;line-height:17px;color:#202124;letter-spacing:0.400px;left:687.20px;">Referrals from Sydney – need input</span>
<span class="t" style="top:911.00px;font-size:17px;line-height:17px;color:#5f6368;left:974.40px;transform:scaleX(0.682);transform-origin:0 50%;">—</span>
<span class="t" style="top:912.00px;font-size:17px;line-height:17px;color:#5f6368;letter-spacing:-0.023px;left:991.60px;">...</span>
<span class="t" style="top:913.00px;font-size:15px;line-height:15px;color:#5f6368;letter-spacing:0.089px;left:1080.60px;">Nov 4</span>
<div style="left:354.8px;top:960.05px;width:20px;height:20px;border:1.7px solid #c3c8ce;border-radius:3.500px"></div>
<svg style="left:388.79999999999995px;top:955.9999999999999px" width="27.200" height="27.200" viewBox="0 0 24 24"><path d="M12 3.300L14.400 9.100L20.700 9.650L15.900 13.750L17.350 19.900L12 16.650L6.650 19.900L8.100 13.750L3.300 9.650L9.600 9.100z" fill="none" stroke="#b3bac2" stroke-width="1.150" stroke-linejoin="miter"/></svg>
<span class="t" style="top:960.00px;font-size:17px;line-height:17px;color:#202124;letter-spacing:0.115px;left:428.25px;">Aylin, Leni, me</span>
<span class="t" style="top:962.00px;font-size:14px;line-height:14px;color:#5f6368;left:551.40px;">5</span>
<span class="t" style="top:961.00px;font-size:17px;line-height:17px;color:#202124;letter-spacing:0.320px;left:688.20px;">Checking in re: Boston</span>
<span class="t" style="top:961.00px;font-size:17px;line-height:17px;color:#5f6368;letter-spacing:0.229px;left:872.30px;">– Hey there. He...</span>
<span class="t" style="top:962.00px;font-size:15px;line-height:15px;color:#5f6368;letter-spacing:0.089px;left:1080.60px;">Nov 4</span>
</main>
<aside class="quick">
<div style="left:1155px;top:81px;width:1px;height:919px;background:#e4e8eb"></div>
<span class="t" style="top:102.00px;font-size:20px;line-height:20px;color:#202124;letter-spacing:0.184px;left:1176.50px;">Quick settings</span>
<svg style="left:1484.65px;top:99.9px" width="25.7" height="25.7" viewBox="0 0 24 24" fill="#3c4043"><path d="M19 6.410L17.590 5 12 10.590 6.410 5 5 6.410 10.590 12 5 17.590 6.410 19 12 13.410 17.590 19 19 17.590 13.410 12z"/></svg>
<div style="left:1175px;top:145px;width:336px;height:45px;border:1px solid #dadce0;border-radius:5px;background:#fff"></div>
<span class="t" style="top:158.00px;font-size:17.5px;line-height:17.5px;color:#1a6df0;letter-spacing:0.355px;left:1281.25px;">See all settings</span>
<div style="left:1156px;top:210px;width:374px;height:1px;background:#e8eaed"></div>
<div style="left:1517px;top:212px;width:10px;height:356px;background:#e8eaed;border-radius:5px"></div>
<span class="t" style="top:235.00px;font-size:13.5px;line-height:13.5px;color:#5f6368;letter-spacing:0.533px;left:1174.70px;">DENSITY</span>
<div style="left:1177.0px;top:283.25px;width:20.800px;height:20.800px;border-radius:50%;border:2px solid #1b6ef3"></div>
<div style="left:1182.2px;top:288.45px;width:10.400px;height:10.400px;border-radius:50%;background:#4285f4"></div>
<div style="left:1177.0px;top:343.25px;width:20.800px;height:20.800px;border-radius:50%;border:2px solid #70777f"></div>
<div style="left:1177.0px;top:403.25px;width:20.800px;height:20.800px;border-radius:50%;border:2px solid #70777f"></div>
<span class="t" style="top:286.00px;font-size:17px;line-height:17px;color:#202124;letter-spacing:0.543px;left:1219.80px;">Default</span>
<span class="t" style="top:346.00px;font-size:17px;line-height:17px;color:#202124;letter-spacing:0.716px;left:1220.80px;">Comfortable</span>
<span class="t" style="top:406.00px;font-size:17px;line-height:17px;color:#202124;letter-spacing:0.516px;left:1220.80px;">Compact</span>
<div style="left:1405px;top:274px;width:90px;height:40px;border:1px solid #dadce0;border-radius:5px;background:#fff"><div style="left:7px;top:5.5px;width:6px;height:6px;border:1px solid #d2d4da;border-radius:1px"></div><div style="left:18.3px;top:6.2px;width:62px;height:3.6px;background:#dcdde2;border-radius:2px"></div><div style="left:18.300px;top:13.800px;width:62.400px;height:21px;border-radius:10.500px;background:#e8f0fe"></div><svg style="left:26px;top:16.400px" width="16" height="16" viewBox="0 0 16 16"><rect x="1" y="1" width="14" height="14" rx="1.500" fill="#1a63e8"/><rect x="3.500" y="4" width="9" height="1.800" fill="#fff"/><rect x="3.500" y="7.200" width="9" height="1.800" fill="#fff"/><rect x="3.500" y="10.400" width="6" height="1.800" fill="#fff"/></svg></div>
<div style="left:1405px;top:334px;width:90px;height:40px;border:1px solid #dadce0;border-radius:5px;background:#fff"><div style="left:7px;top:6.5px;width:6px;height:6px;border:1px solid #d2d4da;border-radius:1px"></div><div style="left:18.3px;top:7.5px;width:62px;height:3.6px;background:#dcdde2;border-radius:2px"></div><div style="left:0;top:19px;width:88px;height:1px;background:#dadce0"></div><div style="left:7px;top:25.5px;width:6px;height:6px;border:1px solid #d2d4da;border-radius:1px"></div><div style="left:18.3px;top:26.4px;width:62px;height:3.6px;background:#dcdde2;border-radius:2px"></div></div>
<div style="left:1405px;top:394px;width:90px;height:40px;border:1px solid #dadce0;border-radius:5px;background:#fff"><div style="left:7px;top:2.5px;width:6px;height:6px;border:1px solid #d2d4da;border-radius:1px"></div><div style="left:18.3px;top:4px;width:62px;height:3.3px;background:#dcdde2;border-radius:2px"></div><div style="left:0;top:11px;width:88px;height:1px;background:#dadce0"></div><div style="left:7px;top:15px;width:6px;height:6px;border:1px solid #d2d4da;border-radius:1px"></div><div style="left:18.3px;top:16.3px;width:62px;height:3.3px;background:#dcdde2;border-radius:2px"></div><div style="left:0;top:24px;width:88px;height:1px;background:#dadce0"></div><div style="left:7px;top:27.5px;width:6px;height:6px;border:1px solid #d2d4da;border-radius:1px"></div><div style="left:18.3px;top:28.9px;width:62px;height:3.3px;background:#dcdde2;border-radius:2px"></div></div>
<div style="left:1156px;top:454px;width:355px;height:1px;background:#e8eaed"></div>
<span class="t" style="top:478.00px;font-size:13.5px;line-height:13.5px;color:#5f6368;letter-spacing:0.439px;left:1175.70px;">THEME</span>
<span class="t" style="top:474.00px;font-size:17.5px;line-height:17.5px;color:#1a6df0;letter-spacing:0.558px;left:1431.30px;">View all</span>
<div style="left:1175px;top:514px;width:72px;height:50px;border:2px solid #1967f2;border-radius:5px;background:#fff;overflow:hidden">
<div style="left:0;top:13.500px;width:68px;height:1px;background:#eceff1"></div>
<div style="left:6px;top:5.500px;width:5px;height:1px;background:#80868b;box-shadow:0 1.500px 0 #80868b,0 3px 0 #80868b"></div>
<svg style="left:16.500px;top:4px" width="9" height="6.500" viewBox="0 0 9 6.500"><path d="M.6 6.300V.8L4.500 3.800 8.400.8V6.300" fill="none" stroke="#ea4335" stroke-width="1.200"/></svg>
<div style="left:60px;top:2.500px;width:10px;height:8.500px;background:#f1f3f4;border-radius:1px"></div>
<svg style="left:62.500px;top:4px" width="6" height="6" viewBox="0 0 6 6"><circle cx="2.300" cy="2.300" r="1.600" fill="none" stroke="#9aa0a6" stroke-width=".7"/><path d="M3.500 3.500L5.300 5.300" stroke="#9aa0a6" stroke-width=".7"/></svg>
<div style="left:1px;top:17.700px;width:40.500px;height:14px;border-radius:7px;background:#fff;box-shadow:0 .5px 1.500px rgba(60,64,67,.45)"></div>
<svg style="left:5.500px;top:21px" width="7" height="7" viewBox="0 0 8 8"><rect x="3.400" y="0" width="1.200" height="4" fill="#ea4335"/><rect x="3.400" y="4" width="1.200" height="4" fill="#34a853"/><rect x="0" y="3.400" width="4" height="1.200" fill="#fbbc04"/><rect x="4" y="3.400" width="4" height="1.200" fill="#4285f4"/></svg>
<div style="left:16.700px;top:23.200px;width:18.500px;height:3.200px;border-radius:1.600px;background:#e8eaed"></div>
<div style="left:0;top:35.200px;width:51.800px;height:13px;border-radius:0 6.500px 6.500px 0;background:#fce8e6"></div>
<div style="left:6.400px;top:37.800px;width:5.400px;height:5.400px;border:1.200px solid #d93025;border-radius:1px"></div>
<div style="left:16.700px;top:38.400px;width:18.500px;height:3.600px;background:#d50000"></div>
<div style="left:63px;top:17.700px;width:6px;height:4.500px;border:1px solid #dadce0;border-radius:1px"></div>
<div style="left:63px;top:30.400px;width:6px;height:4.500px;border:1px solid #dadce0;border-radius:1px"></div>
<div style="left:63px;top:42.600px;width:6px;height:4.500px;border:1px solid #dadce0;border-radius:1px"></div>
<div style="left:60px;top:26.500px;width:10px;height:1px;background:#eceff1"></div><div style="left:60px;top:39px;width:10px;height:1px;background:#eceff1"></div>
</div>
<span class="t" style="top:521.00px;font-size:5.5px;line-height:5.5px;color:#80868b;letter-spacing:0.090px;left:1205.20px;">Gmail</span>
<div style="left:1258px;top:514px;width:72px;height:50px;background:#000;border-radius:5px"></div>
<svg style="left:1340px;top:514px" width="72" height="50" viewBox="0 0 72 50"><defs><clipPath id="thB"><rect width="72" height="50" rx="4.500"/></clipPath></defs><g clip-path="url(#thB)"><defs><linearGradient id="bs" x1="0" y1="0" x2="0" y2="1"><stop offset="0" stop-color="#2b3651"/><stop offset=".45" stop-color="#4f6080"/><stop offset="1" stop-color="#36496a"/></linearGradient>
<linearGradient id="bk" x1="0" y1="0" x2="0" y2="1"><stop offset="0" stop-color="#1f78d6"/><stop offset=".75" stop-color="#2f86dc"/><stop offset="1" stop-color="#9fcdef"/></linearGradient>
<linearGradient id="bw" x1="0" y1="0" x2="0" y2="1"><stop offset="0" stop-color="#1f6f72"/><stop offset=".55" stop-color="#36a37c"/><stop offset="1" stop-color="#c2b566"/></linearGradient></defs>
<rect width="72" height="34" fill="url(#bk)"/>
<path d="M0 0H72V17C68 16 65 19 60 20C54 23 46 23 40 25C30 26.500 18 26 8 24L0 22z" fill="url(#bs)"/>
<path d="M38 18C42 14 50 11 57 10.500C63 10 68 12 72 14V19C68 17.500 64 21 58 21C50 22 44 22 38 24.500C36 22 36 20 38 18z" fill="#b9c5d8" opacity=".8"/>
<path d="M12 9C18 7 26 8 32 11C26 11.500 18 12 12 9z" fill="#6e7f9c" opacity=".7"/>
<path d="M60 23C64 21 69 22 72 23V27C68 27 63 26 60 23z" fill="#d9e4f0"/><path d="M60 24.500C65 24 69 25 72 26V28C68 28 64 27 60 24.500z" fill="#2c5f9e"/>
<rect y="32.500" width="72" height="8.500" fill="url(#bw)"/><rect y="31.800" width="72" height="1.300" fill="#2a5663"/><path d="M50 32L72 30.500V32.500H50z" fill="#4a6a7a"/>
<rect y="40.500" width="72" height="10" fill="#e3ad58"/><rect y="40" width="72" height="2.500" fill="#dcb868" opacity=".8"/><path d="M0 46L72 43V50H0z" fill="#e8b560"/>
<path d="M30.300 38h2.400v4.500h-2.400z" fill="#8c3027"/><path d="M30.600 42.500h1.900v3.500h-1.900z" fill="#4a4a58"/></g></svg>
<svg style="left:1423px;top:514px" width="72" height="50" viewBox="0 0 72 50"><defs><clipPath id="thP"><rect width="72" height="50" rx="4.500"/></clipPath></defs><g clip-path="url(#thP)"><rect width="72" height="50" fill="#333"/><ellipse cx="32.4" cy="28.2" rx="3.6" ry="2.8" fill="#7e8083" stroke="#262626" stroke-width=".55" transform="rotate(1 32.4 28.2)"/><ellipse cx="12.4" cy="41.4" rx="2.7" ry="2.2" fill="#a4a6a9" stroke="#262626" stroke-width=".55" transform="rotate(-44 12.4 41.4)"/><ellipse cx="21.1" cy="2.9" rx="3.4" ry="2.9" fill="#6a6c6f" stroke="#262626" stroke-width=".55" transform="rotate(-64 21.1 2.9)"/><ellipse cx="71.3" cy="33.3" rx="3.0" ry="2.0" fill="#8d8f92" stroke="#262626" stroke-width=".55" transform="rotate(-68 71.3 33.3)"/><ellipse cx="2.8" cy="-0.1" rx="3.5" ry="2.9" fill="#77797c" stroke="#262626" stroke-width=".55" transform="rotate(39 2.8 -0.1)"/><ellipse cx="31.5" cy="43.5" rx="2.8" ry="2.3" fill="#85878a" stroke="#262626" stroke-width=".55" transform="rotate(-0 31.5 43.5)"/><ellipse cx="32.8" cy="13.0" rx="3.8" ry="3.6" fill="#57585a" stroke="#262626" stroke-width=".55" transform="rotate(48 32.8 13.0)"/><ellipse cx="22.0" cy="10.4" rx="2.3" ry="1.5" fill="#6a6c6f" stroke="#262626" stroke-width=".55" transform="rotate(37 22.0 10.4)"/><ellipse cx="6.2" cy="13.7" rx="1.8" ry="1.2" fill="#9a9c9f" stroke="#262626" stroke-width=".55" transform="rotate(26 6.2 13.7)"/><ellipse cx="13.9" cy="47.2" rx="2.7" ry="2.5" fill="#85878a" stroke="#262626" stroke-width=".55" transform="rotate(-14 13.9 47.2)"/><ellipse cx="41.0" cy="8.7" rx="3.1" ry="2.3" fill="#6f7072" stroke="#262626" stroke-width=".55" transform="rotate(-26 41.0 8.7)"/><ellipse cx="71.3" cy="38.9" rx="1.9" ry="1.4" fill="#6f7072" stroke="#262626" stroke-width=".55" transform="rotate(-56 71.3 38.9)"/><ellipse cx="33.3" cy="24.3" rx="3.1" ry="2.1" fill="#5f6062" stroke="#262626" stroke-width=".55" transform="rotate(1 33.3 24.3)"/><ellipse cx="29.9" cy="18.7" rx="2.5" ry="2.4" fill="#7e8083" stroke="#262626" stroke-width=".55" transform="rotate(-70 29.9 18.7)"/><ellipse cx="21.1" cy="45.8" rx="2.1" ry="1.6" fill="#7e8083" stroke="#262626" stroke-width=".55" transform="rotate(50 21.1 45.8)"/><ellipse cx="5.6" cy="51.4" rx="2.1" ry="1.5" fill="#77797c" stroke="#262626" stroke-width=".55" transform="rotate(38 5.6 51.4)"/><ellipse cx="61.1" cy="18.9" rx="1.9" ry="1.3" fill="#6f7072" stroke="#262626" stroke-width=".55" transform="rotate(19 61.1 18.9)"/><ellipse cx="43.7" cy="18.1" rx="2.7" ry="2.5" fill="#7e8083" stroke="#262626" stroke-width=".55" transform="rotate(-2 43.7 18.1)"/><ellipse cx="8.3" cy="18.8" rx="3.0" ry="2.2" fill="#7e8083" stroke="#262626" stroke-width=".55" transform="rotate(-38 8.3 18.8)"/><ellipse cx="17.0" cy="8.2" rx="3.3" ry="3.0" fill="#6a6c6f" stroke="#262626" stroke-width=".55" transform="rotate(-42 17.0 8.2)"/><ellipse cx="65.0" cy="30.6" rx="2.6" ry="1.7" fill="#57585a" stroke="#262626" stroke-width=".55" transform="rotate(-65 65.0 30.6)"/><ellipse cx="16.1" cy="36.0" rx="2.2" ry="2.0" fill="#57585a" stroke="#262626" stroke-width=".55" transform="rotate(14 16.1 36.0)"/><ellipse cx="37.5" cy="48.2" rx="3.8" ry="2.5" fill="#7e8083" stroke="#262626" stroke-width=".55" transform="rotate(-3 37.5 48.2)"/><ellipse cx="44.7" cy="13.1" rx="3.6" ry="2.5" fill="#57585a" stroke="#262626" stroke-width=".55" transform="rotate(-68 44.7 13.1)"/><ellipse cx="29.3" cy="11.4" rx="1.8" ry="1.3" fill="#5f6062" stroke="#262626" stroke-width=".55" transform="rotate(4 29.3 11.4)"/><ellipse cx="5.0" cy="5.5" rx="2.6" ry="1.9" fill="#8d8f92" stroke="#262626" stroke-width=".55" transform="rotate(33 5.0 5.5)"/><ellipse cx="42.4" cy="5.6" rx="1.8" ry="1.1" fill="#57585a" stroke="#262626" stroke-width=".55" transform="rotate(57 42.4 5.6)"/><ellipse cx="71.2" cy="-0.9" rx="3.0" ry="2.4" fill="#77797c" stroke="#262626" stroke-width=".55" transform="rotate(32 71.2 -0.9)"/><ellipse cx="8.4" cy="1.9" rx="2.7" ry="2.0" fill="#5f6062" stroke="#262626" stroke-width=".55" transform="rotate(-64 8.4 1.9)"/><ellipse cx="58.3" cy="47.4" rx="2.4" ry="2.1" fill="#6a6c6f" stroke="#262626" stroke-width=".55" transform="rotate(56 58.3 47.4)"/><ellipse cx="69.8" cy="-0.4" rx="2.7" ry="1.7" fill="#6a6c6f" stroke="#262626" stroke-width=".55" transform="rotate(23 69.8 -0.4)"/><ellipse cx="42.3" cy="30.9" rx="1.9" ry="1.6" fill="#6a6c6f" stroke="#262626" stroke-width=".55" transform="rotate(69 42.3 30.9)"/><ellipse cx="53.3" cy="19.0" rx="3.2" ry="2.6" fill="#8d8f92" stroke="#262626" stroke-width=".55" transform="rotate(-8 53.3 19.0)"/><ellipse cx="4.4" cy="38.5" rx="1.8" ry="1.4" fill="#9a9c9f" stroke="#262626" stroke-width=".55" transform="rotate(-3 4.4 38.5)"/><ellipse cx="70.8" cy="4.1" rx="3.3" ry="2.8" fill="#6f7072" stroke="#262626" stroke-width=".55" transform="rotate(-2 70.8 4.1)"/><ellipse cx="26.0" cy="5.7" rx="3.0" ry="2.4" fill="#77797c" stroke="#262626" stroke-width=".55" transform="rotate(36 26.0 5.7)"/><ellipse cx="48.2" cy="21.9" rx="3.6" ry="2.6" fill="#9a9c9f" stroke="#262626" stroke-width=".55" transform="rotate(23 48.2 21.9)"/><ellipse cx="46.2" cy="41.4" rx="3.3" ry="2.3" fill="#9a9c9f" stroke="#262626" stroke-width=".55" transform="rotate(-40 46.2 41.4)"/><ellipse cx="42.3" cy="15.1" rx="2.0" ry="1.6" fill="#6f7072" stroke="#262626" stroke-width=".55" transform="rotate(47 42.3 15.1)"/><ellipse cx="52.1" cy="49.3" rx="2.3" ry="1.5" fill="#57585a" stroke="#262626" stroke-width=".55" transform="rotate(-7 52.1 49.3)"/><ellipse cx="68.4" cy="42.9" rx="2.5" ry="2.0" fill="#7e8083" stroke="#262626" stroke-width=".55" transform="rotate(24 68.4 42.9)"/><ellipse cx="32.4" cy="2.0" rx="1.8" ry="1.6" fill="#57585a" stroke="#262626" stroke-width=".55" transform="rotate(-64 32.4 2.0)"/><ellipse cx="41.4" cy="14.7" rx="3.4" ry="2.1" fill="#a4a6a9" stroke="#262626" stroke-width=".55" transform="rotate(-51 41.4 14.7)"/><ellipse cx="12.4" cy="39.5" rx="2.3" ry="2.0" fill="#85878a" stroke="#262626" stroke-width=".55" transform="rotate(42 12.4 39.5)"/><ellipse cx="31.9" cy="32.0" rx="3.1" ry="2.7" fill="#9a9c9f" stroke="#262626" stroke-width=".55" transform="rotate(64 31.9 32.0)"/><ellipse cx="13.1" cy="23.7" rx="2.1" ry="1.3" fill="#6f7072" stroke="#262626" stroke-width=".55" transform="rotate(-4 13.1 23.7)"/><ellipse cx="11.6" cy="12.7" rx="2.4" ry="2.1" fill="#7e8083" stroke="#262626" stroke-width=".55" transform="rotate(3 11.6 12.7)"/><ellipse cx="73.8" cy="6.6" rx="3.5" ry="3.0" fill="#6a6c6f" stroke="#262626" stroke-width=".55" transform="rotate(-39 73.8 6.6)"/><ellipse cx="68.9" cy="37.0" rx="2.0" ry="1.5" fill="#6f7072" stroke="#262626" stroke-width=".55" transform="rotate(18 68.9 37.0)"/><ellipse cx="26.6" cy="28.7" rx="3.5" ry="3.1" fill="#a4a6a9" stroke="#262626" stroke-width=".55" transform="rotate(62 26.6 28.7)"/><ellipse cx="22.8" cy="51.0" rx="1.9" ry="1.7" fill="#85878a" stroke="#262626" stroke-width=".55" transform="rotate(42 22.8 51.0)"/><ellipse cx="14.2" cy="46.6" rx="3.8" ry="3.5" fill="#77797c" stroke="#262626" stroke-width=".55" transform="rotate(5 14.2 46.6)"/><ellipse cx="17.9" cy="36.8" rx="1.7" ry="1.4" fill="#77797c" stroke="#262626" stroke-width=".55" transform="rotate(-65 17.9 36.8)"/><ellipse cx="39.8" cy="39.5" rx="2.7" ry="1.7" fill="#85878a" stroke="#262626" stroke-width=".55" transform="rotate(43 39.8 39.5)"/><ellipse cx="30.6" cy="-0.1" rx="2.8" ry="2.4" fill="#a4a6a9" stroke="#262626" stroke-width=".55" transform="rotate(58 30.6 -0.1)"/><ellipse cx="9.3" cy="25.9" rx="3.2" ry="2.9" fill="#a4a6a9" stroke="#262626" stroke-width=".55" transform="rotate(27 9.3 25.9)"/><ellipse cx="42.0" cy="35.2" rx="3.3" ry="2.5" fill="#8d8f92" stroke="#262626" stroke-width=".55" transform="rotate(8 42.0 35.2)"/><ellipse cx="46.6" cy="26.2" rx="3.5" ry="2.8" fill="#6a6c6f" stroke="#262626" stroke-width=".55" transform="rotate(-26 46.6 26.2)"/><ellipse cx="70.6" cy="45.0" rx="3.0" ry="2.1" fill="#8d8f92" stroke="#262626" stroke-width=".55" transform="rotate(-50 70.6 45.0)"/><ellipse cx="37.8" cy="28.9" rx="2.1" ry="1.7" fill="#7e8083" stroke="#262626" stroke-width=".55" transform="rotate(0 37.8 28.9)"/><ellipse cx="26.7" cy="27.1" rx="1.8" ry="1.7" fill="#7e8083" stroke="#262626" stroke-width=".55" transform="rotate(6 26.7 27.1)"/><ellipse cx="7.3" cy="3.0" rx="2.1" ry="1.9" fill="#6a6c6f" stroke="#262626" stroke-width=".55" transform="rotate(-6 7.3 3.0)"/><ellipse cx="18.5" cy="23.6" rx="2.0" ry="1.5" fill="#a4a6a9" stroke="#262626" stroke-width=".55" transform="rotate(44 18.5 23.6)"/><ellipse cx="37.9" cy="3.9" rx="2.6" ry="1.6" fill="#6f7072" stroke="#262626" stroke-width=".55" transform="rotate(-34 37.9 3.9)"/><ellipse cx="0.7" cy="6.4" rx="1.7" ry="1.2" fill="#9a9c9f" stroke="#262626" stroke-width=".55" transform="rotate(31 0.7 6.4)"/><ellipse cx="45.1" cy="3.7" rx="3.2" ry="2.1" fill="#57585a" stroke="#262626" stroke-width=".55" transform="rotate(1 45.1 3.7)"/><ellipse cx="52.5" cy="35.9" rx="3.5" ry="2.2" fill="#8d8f92" stroke="#262626" stroke-width=".55" transform="rotate(19 52.5 35.9)"/><ellipse cx="44.8" cy="27.1" rx="3.5" ry="2.8" fill="#9a9c9f" stroke="#262626" stroke-width=".55" transform="rotate(-39 44.8 27.1)"/><ellipse cx="62.7" cy="31.0" rx="3.5" ry="2.4" fill="#77797c" stroke="#262626" stroke-width=".55" transform="rotate(34 62.7 31.0)"/><ellipse cx="66.6" cy="15.1" rx="2.4" ry="2.2" fill="#9a9c9f" stroke="#262626" stroke-width=".55" transform="rotate(-39 66.6 15.1)"/><ellipse cx="65.5" cy="5.2" rx="2.2" ry="1.9" fill="#85878a" stroke="#262626" stroke-width=".55" transform="rotate(-34 65.5 5.2)"/><ellipse cx="31.0" cy="48.8" rx="2.8" ry="2.4" fill="#6f7072" stroke="#262626" stroke-width=".55" transform="rotate(-42 31.0 48.8)"/><ellipse cx="5.3" cy="28.8" rx="2.5" ry="2.2" fill="#8d8f92" stroke="#262626" stroke-width=".55" transform="rotate(-19 5.3 28.8)"/><ellipse cx="46.2" cy="16.5" rx="3.8" ry="3.4" fill="#a4a6a9" stroke="#262626" stroke-width=".55" transform="rotate(42 46.2 16.5)"/><ellipse cx="6.1" cy="0.0" rx="2.9" ry="2.3" fill="#5f6062" stroke="#262626" stroke-width=".55" transform="rotate(10 6.1 0.0)"/><ellipse cx="12.4" cy="4.2" rx="2.1" ry="1.4" fill="#85878a" stroke="#262626" stroke-width=".55" transform="rotate(-30 12.4 4.2)"/><ellipse cx="42.1" cy="5.3" rx="3.1" ry="2.0" fill="#6a6c6f" stroke="#262626" stroke-width=".55" transform="rotate(-56 42.1 5.3)"/><ellipse cx="33.5" cy="25.8" rx="2.6" ry="2.1" fill="#6f7072" stroke="#262626" stroke-width=".55" transform="rotate(-68 33.5 25.8)"/><ellipse cx="62.2" cy="7.8" rx="2.7" ry="2.3" fill="#9a9c9f" stroke="#262626" stroke-width=".55" transform="rotate(-13 62.2 7.8)"/><ellipse cx="44.0" cy="3.1" rx="3.4" ry="2.4" fill="#6a6c6f" stroke="#262626" stroke-width=".55" transform="rotate(-58 44.0 3.1)"/><ellipse cx="41.3" cy="8.3" rx="2.9" ry="2.1" fill="#57585a" stroke="#262626" stroke-width=".55" transform="rotate(37 41.3 8.3)"/><ellipse cx="67.3" cy="38.2" rx="3.3" ry="3.0" fill="#77797c" stroke="#262626" stroke-width=".55" transform="rotate(-13 67.3 38.2)"/><ellipse cx="64.9" cy="35.5" rx="3.3" ry="2.9" fill="#5f6062" stroke="#262626" stroke-width=".55" transform="rotate(-13 64.9 35.5)"/><ellipse cx="3.4" cy="16.5" rx="2.7" ry="1.7" fill="#7e8083" stroke="#262626" stroke-width=".55" transform="rotate(-20 3.4 16.5)"/><ellipse cx="1.8" cy="12.7" rx="3.7" ry="2.7" fill="#6a6c6f" stroke="#262626" stroke-width=".55" transform="rotate(-40 1.8 12.7)"/><ellipse cx="41.3" cy="26.8" rx="2.5" ry="2.4" fill="#85878a" stroke="#262626" stroke-width=".55" transform="rotate(20 41.3 26.8)"/><ellipse cx="55.9" cy="50.9" rx="1.7" ry="1.4" fill="#57585a" stroke="#262626" stroke-width=".55" transform="rotate(33 55.9 50.9)"/><ellipse cx="31.7" cy="25.3" rx="3.3" ry="2.8" fill="#57585a" stroke="#262626" stroke-width=".55" transform="rotate(-68 31.7 25.3)"/><ellipse cx="17.1" cy="46.9" rx="2.9" ry="2.2" fill="#7e8083" stroke="#262626" stroke-width=".55" transform="rotate(65 17.1 46.9)"/><ellipse cx="62.3" cy="3.4" rx="2.6" ry="2.2" fill="#6f7072" stroke="#262626" stroke-width=".55" transform="rotate(7 62.3 3.4)"/><ellipse cx="27.4" cy="48.7" rx="2.5" ry="2.4" fill="#8d8f92" stroke="#262626" stroke-width=".55" transform="rotate(50 27.4 48.7)"/><ellipse cx="44.4" cy="1.2" rx="3.7" ry="2.8" fill="#7e8083" stroke="#262626" stroke-width=".55" transform="rotate(4 44.4 1.2)"/><ellipse cx="21.7" cy="26.6" rx="2.7" ry="1.9" fill="#57585a" stroke="#262626" stroke-width=".55" transform="rotate(60 21.7 26.6)"/><ellipse cx="0.0" cy="39.7" rx="2.9" ry="2.4" fill="#6a6c6f" stroke="#262626" stroke-width=".55" transform="rotate(-13 0.0 39.7)"/><ellipse cx="2.0" cy="15.0" rx="2.5" ry="2.1" fill="#77797c" stroke="#262626" stroke-width=".55" transform="rotate(31 2.0 15.0)"/><ellipse cx="3.6" cy="46.9" rx="2.6" ry="2.0" fill="#9a9c9f" stroke="#262626" stroke-width=".55" transform="rotate(66 3.6 46.9)"/><ellipse cx="1.5" cy="3.3" rx="3.4" ry="3.1" fill="#9a9c9f" stroke="#262626" stroke-width=".55" transform="rotate(-50 1.5 3.3)"/><ellipse cx="43.9" cy="4.2" rx="3.0" ry="2.3" fill="#6f7072" stroke="#262626" stroke-width=".55" transform="rotate(-41 43.9 4.2)"/><ellipse cx="25.1" cy="6.4" rx="2.5" ry="1.6" fill="#7e8083" stroke="#262626" stroke-width=".55" transform="rotate(-12 25.1 6.4)"/><ellipse cx="17.9" cy="29.4" rx="2.6" ry="2.3" fill="#5f6062" stroke="#262626" stroke-width=".55" transform="rotate(4 17.9 29.4)"/><ellipse cx="70.4" cy="37.7" rx="2.2" ry="1.4" fill="#8d8f92" stroke="#262626" stroke-width=".55" transform="rotate(55 70.4 37.7)"/><ellipse cx="45.5" cy="17.4" rx="2.3" ry="1.9" fill="#7e8083" stroke="#262626" stroke-width=".55" transform="rotate(9 45.5 17.4)"/><ellipse cx="12.4" cy="13.0" rx="2.2" ry="2.1" fill="#9a9c9f" stroke="#262626" stroke-width=".55" transform="rotate(0 12.4 13.0)"/><ellipse cx="64.8" cy="0.1" rx="1.8" ry="1.3" fill="#7e8083" stroke="#262626" stroke-width=".55" transform="rotate(-10 64.8 0.1)"/><ellipse cx="0.9" cy="10.0" rx="2.3" ry="2.0" fill="#5f6062" stroke="#262626" stroke-width=".55" transform="rotate(58 0.9 10.0)"/><ellipse cx="39.8" cy="32.1" rx="2.5" ry="1.9" fill="#77797c" stroke="#262626" stroke-width=".55" transform="rotate(-41 39.8 32.1)"/><ellipse cx="35.6" cy="5.2" rx="3.5" ry="3.1" fill="#7e8083" stroke="#262626" stroke-width=".55" transform="rotate(-7 35.6 5.2)"/><ellipse cx="61.7" cy="39.5" rx="2.6" ry="2.3" fill="#5f6062" stroke="#262626" stroke-width=".55" transform="rotate(-15 61.7 39.5)"/><ellipse cx="26.0" cy="33.3" rx="3.8" ry="2.7" fill="#5f6062" stroke="#262626" stroke-width=".55" transform="rotate(7 26.0 33.3)"/><ellipse cx="30.5" cy="17.9" rx="1.9" ry="1.7" fill="#85878a" stroke="#262626" stroke-width=".55" transform="rotate(-59 30.5 17.9)"/><ellipse cx="30.8" cy="28.7" rx="3.4" ry="2.6" fill="#6f7072" stroke="#262626" stroke-width=".55" transform="rotate(45 30.8 28.7)"/><ellipse cx="3.8" cy="9.5" rx="3.1" ry="2.0" fill="#77797c" stroke="#262626" stroke-width=".55" transform="rotate(-27 3.8 9.5)"/><ellipse cx="19.5" cy="5.7" rx="2.5" ry="2.1" fill="#85878a" stroke="#262626" stroke-width=".55" transform="rotate(-19 19.5 5.7)"/><ellipse cx="22.5" cy="21.8" rx="2.9" ry="2.7" fill="#57585a" stroke="#262626" stroke-width=".55" transform="rotate(26 22.5 21.8)"/><ellipse cx="31.3" cy="41.4" rx="2.3" ry="1.7" fill="#8d8f92" stroke="#262626" stroke-width=".55" transform="rotate(-14 31.3 41.4)"/><ellipse cx="16.9" cy="17.5" rx="2.5" ry="1.8" fill="#6a6c6f" stroke="#262626" stroke-width=".55" transform="rotate(-15 16.9 17.5)"/><ellipse cx="58.5" cy="37.9" rx="2.5" ry="1.9" fill="#7e8083" stroke="#262626" stroke-width=".55" transform="rotate(-48 58.5 37.9)"/><ellipse cx="40.8" cy="7.5" rx="3.3" ry="3.0" fill="#6f7072" stroke="#262626" stroke-width=".55" transform="rotate(-31 40.8 7.5)"/><ellipse cx="14.8" cy="1.1" rx="2.0" ry="1.5" fill="#6a6c6f" stroke="#262626" stroke-width=".55" transform="rotate(-67 14.8 1.1)"/><ellipse cx="2.9" cy="27.5" rx="3.4" ry="2.2" fill="#85878a" stroke="#262626" stroke-width=".55" transform="rotate(-59 2.9 27.5)"/><ellipse cx="66.3" cy="2.6" rx="3.0" ry="2.0" fill="#6a6c6f" stroke="#262626" stroke-width=".55" transform="rotate(34 66.3 2.6)"/><ellipse cx="16.7" cy="9.9" rx="3.3" ry="2.6" fill="#6a6c6f" stroke="#262626" stroke-width=".55" transform="rotate(37 16.7 9.9)"/><ellipse cx="24.6" cy="41.6" rx="2.4" ry="1.6" fill="#85878a" stroke="#262626" stroke-width=".55" transform="rotate(-2 24.6 41.6)"/><ellipse cx="51.8" cy="47.4" rx="2.6" ry="2.3" fill="#6f7072" stroke="#262626" stroke-width=".55" transform="rotate(23 51.8 47.4)"/><ellipse cx="59.2" cy="43.0" rx="3.6" ry="3.3" fill="#8d8f92" stroke="#262626" stroke-width=".55" transform="rotate(20 59.2 43.0)"/><ellipse cx="25.5" cy="-1.5" rx="1.9" ry="1.8" fill="#9a9c9f" stroke="#262626" stroke-width=".55" transform="rotate(58 25.5 -1.5)"/><ellipse cx="54.3" cy="51.5" rx="2.5" ry="1.7" fill="#6a6c6f" stroke="#262626" stroke-width=".55" transform="rotate(-41 54.3 51.5)"/><ellipse cx="38.2" cy="12.8" rx="3.6" ry="2.8" fill="#57585a" stroke="#262626" stroke-width=".55" transform="rotate(32 38.2 12.8)"/><ellipse cx="47.2" cy="39.9" rx="2.1" ry="1.3" fill="#7e8083" stroke="#262626" stroke-width=".55" transform="rotate(-6 47.2 39.9)"/><ellipse cx="34.6" cy="41.2" rx="2.4" ry="1.6" fill="#7e8083" stroke="#262626" stroke-width=".55" transform="rotate(-20 34.6 41.2)"/><ellipse cx="15.9" cy="36.7" rx="2.9" ry="2.0" fill="#57585a" stroke="#262626" stroke-width=".55" transform="rotate(-44 15.9 36.7)"/><ellipse cx="28.6" cy="47.2" rx="3.7" ry="3.0" fill="#8d8f92" stroke="#262626" stroke-width=".55" transform="rotate(62 28.6 47.2)"/><ellipse cx="34.4" cy="12.1" rx="3.6" ry="3.3" fill="#8d8f92" stroke="#262626" stroke-width=".55" transform="rotate(-22 34.4 12.1)"/><ellipse cx="56.6" cy="3.0" rx="3.5" ry="2.6" fill="#5f6062" stroke="#262626" stroke-width=".55" transform="rotate(-40 56.6 3.0)"/><ellipse cx="58.9" cy="18.8" rx="2.8" ry="2.2" fill="#6f7072" stroke="#262626" stroke-width=".55" transform="rotate(-32 58.9 18.8)"/><ellipse cx="48.0" cy="10.8" rx="1.7" ry="1.3" fill="#9a9c9f" stroke="#262626" stroke-width=".55" transform="rotate(-18 48.0 10.8)"/><ellipse cx="52.2" cy="30.7" rx="2.0" ry="1.4" fill="#57585a" stroke="#262626" stroke-width=".55" transform="rotate(-25 52.2 30.7)"/><ellipse cx="67.0" cy="41.7" rx="2.0" ry="1.7" fill="#8d8f92" stroke="#262626" stroke-width=".55" transform="rotate(17 67.0 41.7)"/><ellipse cx="38.6" cy="6.1" rx="3.3" ry="2.1" fill="#5f6062" stroke="#262626" stroke-width=".55" transform="rotate(45 38.6 6.1)"/><ellipse cx="60.5" cy="2.5" rx="2.3" ry="1.9" fill="#a4a6a9" stroke="#262626" stroke-width=".55" transform="rotate(-56 60.5 2.5)"/><ellipse cx="50.7" cy="2.5" rx="3.3" ry="2.6" fill="#6f7072" stroke="#262626" stroke-width=".55" transform="rotate(1 50.7 2.5)"/><ellipse cx="58.0" cy="20.5" rx="3.6" ry="2.4" fill="#9a9c9f" stroke="#262626" stroke-width=".55" transform="rotate(46 58.0 20.5)"/><ellipse cx="0.8" cy="20.3" rx="2.7" ry="2.6" fill="#77797c" stroke="#262626" stroke-width=".55" transform="rotate(65 0.8 20.3)"/><ellipse cx="21.6" cy="2.1" rx="2.3" ry="1.8" fill="#77797c" stroke="#262626" stroke-width=".55" transform="rotate(30 21.6 2.1)"/><ellipse cx="3.7" cy="5.6" rx="3.1" ry="2.6" fill="#85878a" stroke="#262626" stroke-width=".55" transform="rotate(35 3.7 5.6)"/><ellipse cx="47.7" cy="-1.3" rx="2.5" ry="2.1" fill="#7e8083" stroke="#262626" stroke-width=".55" transform="rotate(-37 47.7 -1.3)"/><ellipse cx="6.6" cy="39.7" rx="3.5" ry="3.1" fill="#7e8083" stroke="#262626" stroke-width=".55" transform="rotate(31 6.6 39.7)"/><ellipse cx="9.6" cy="31.9" rx="3.7" ry="3.2" fill="#6a6c6f" stroke="#262626" stroke-width=".55" transform="rotate(64 9.6 31.9)"/><ellipse cx="40.2" cy="2.7" rx="2.1" ry="1.6" fill="#57585a" stroke="#262626" stroke-width=".55" transform="rotate(-55 40.2 2.7)"/><ellipse cx="69.8" cy="28.4" rx="3.2" ry="2.3" fill="#85878a" stroke="#262626" stroke-width=".55" transform="rotate(46 69.8 28.4)"/><ellipse cx="5.7" cy="31.6" rx="2.0" ry="1.6" fill="#9a9c9f" stroke="#262626" stroke-width=".55" transform="rotate(-45 5.7 31.6)"/><ellipse cx="28.6" cy="43.2" rx="2.9" ry="1.9" fill="#5f6062" stroke="#262626" stroke-width=".55" transform="rotate(-38 28.6 43.2)"/><ellipse cx="73.0" cy="21.4" rx="3.3" ry="2.4" fill="#8d8f92" stroke="#262626" stroke-width=".55" transform="rotate(45 73.0 21.4)"/><ellipse cx="8.6" cy="9.1" rx="2.0" ry="1.7" fill="#6a6c6f" stroke="#262626" stroke-width=".55" transform="rotate(-2 8.6 9.1)"/><ellipse cx="45.4" cy="37.3" rx="3.0" ry="2.2" fill="#9a9c9f" stroke="#262626" stroke-width=".55" transform="rotate(40 45.4 37.3)"/><ellipse cx="48.2" cy="30.9" rx="1.7" ry="1.3" fill="#a4a6a9" stroke="#262626" stroke-width=".55" transform="rotate(-22 48.2 30.9)"/><ellipse cx="6.1" cy="18.4" rx="2.8" ry="2.4" fill="#7e8083" stroke="#262626" stroke-width=".55" transform="rotate(46 6.1 18.4)"/><ellipse cx="52.2" cy="11.7" rx="2.8" ry="2.0" fill="#7e8083" stroke="#262626" stroke-width=".55" transform="rotate(-37 52.2 11.7)"/><ellipse cx="36.0" cy="5.7" rx="3.2" ry="3.0" fill="#9a9c9f" stroke="#262626" stroke-width=".55" transform="rotate(2 36.0 5.7)"/><ellipse cx="41.1" cy="-0.6" rx="3.1" ry="2.7" fill="#a4a6a9" stroke="#262626" stroke-width=".55" transform="rotate(-51 41.1 -0.6)"/><ellipse cx="41.8" cy="35.6" rx="2.4" ry="2.2" fill="#a4a6a9" stroke="#262626" stroke-width=".55" transform="rotate(-19 41.8 35.6)"/><ellipse cx="65.1" cy="22.4" rx="3.2" ry="2.3" fill="#8d8f92" stroke="#262626" stroke-width=".55" transform="rotate(10 65.1 22.4)"/><ellipse cx="40.6" cy="28.3" rx="2.3" ry="2.1" fill="#77797c" stroke="#262626" stroke-width=".55" transform="rotate(69 40.6 28.3)"/><ellipse cx="43.7" cy="4.6" rx="3.4" ry="2.5" fill="#9a9c9f" stroke="#262626" stroke-width=".55" transform="rotate(56 43.7 4.6)"/><ellipse cx="55.6" cy="17.6" rx="2.0" ry="1.7" fill="#a4a6a9" stroke="#262626" stroke-width=".55" transform="rotate(44 55.6 17.6)"/><ellipse cx="0.4" cy="7.7" rx="3.8" ry="3.5" fill="#57585a" stroke="#262626" stroke-width=".55" transform="rotate(22 0.4 7.7)"/><ellipse cx="55.5" cy="43.8" rx="3.6" ry="3.0" fill="#6f7072" stroke="#262626" stroke-width=".55" transform="rotate(20 55.5 43.8)"/><ellipse cx="10.0" cy="20.2" rx="1.8" ry="1.4" fill="#6a6c6f" stroke="#262626" stroke-width=".55" transform="rotate(-53 10.0 20.2)"/><ellipse cx="11.2" cy="26.1" rx="2.3" ry="1.8" fill="#6f7072" stroke="#262626" stroke-width=".55" transform="rotate(-24 11.2 26.1)"/><ellipse cx="52.8" cy="40.5" rx="2.5" ry="2.0" fill="#77797c" stroke="#262626" stroke-width=".55" transform="rotate(-56 52.8 40.5)"/><ellipse cx="29.3" cy="31.7" rx="3.1" ry="2.7" fill="#a4a6a9" stroke="#262626" stroke-width=".55" transform="rotate(35 29.3 31.7)"/><ellipse cx="65.6" cy="23.0" rx="3.6" ry="3.1" fill="#85878a" stroke="#262626" stroke-width=".55" transform="rotate(46 65.6 23.0)"/><ellipse cx="41.0" cy="46.9" rx="2.8" ry="2.2" fill="#6f7072" stroke="#262626" stroke-width=".55" transform="rotate(-9 41.0 46.9)"/><ellipse cx="22.4" cy="1.0" rx="3.2" ry="3.0" fill="#7e8083" stroke="#262626" stroke-width=".55" transform="rotate(32 22.4 1.0)"/><ellipse cx="22.5" cy="40.6" rx="3.6" ry="3.2" fill="#a4a6a9" stroke="#262626" stroke-width=".55" transform="rotate(-36 22.5 40.6)"/><ellipse cx="16.4" cy="45.1" rx="3.7" ry="2.9" fill="#9a9c9f" stroke="#262626" stroke-width=".55" transform="rotate(-55 16.4 45.1)"/><ellipse cx="39.4" cy="33.5" rx="3.7" ry="3.3" fill="#77797c" stroke="#262626" stroke-width=".55" transform="rotate(70 39.4 33.5)"/><ellipse cx="63.9" cy="20.8" rx="3.4" ry="2.4" fill="#7e8083" stroke="#262626" stroke-width=".55" transform="rotate(35 63.9 20.8)"/><ellipse cx="7.3" cy="1.9" rx="2.8" ry="1.9" fill="#7e8083" stroke="#262626" stroke-width=".55" transform="rotate(54 7.3 1.9)"/><ellipse cx="70.3" cy="-2.0" rx="2.2" ry="1.6" fill="#85878a" stroke="#262626" stroke-width=".55" transform="rotate(-25 70.3 -2.0)"/><ellipse cx="31.5" cy="22.3" rx="2.8" ry="1.9" fill="#9a9c9f" stroke="#262626" stroke-width=".55" transform="rotate(27 31.5 22.3)"/><ellipse cx="1.5" cy="-0.3" rx="3.6" ry="2.6" fill="#a4a6a9" stroke="#262626" stroke-width=".55" transform="rotate(-0 1.5 -0.3)"/><ellipse cx="64.8" cy="8.9" rx="3.5" ry="3.0" fill="#77797c" stroke="#262626" stroke-width=".55" transform="rotate(-62 64.8 8.9)"/><ellipse cx="61.7" cy="17.1" rx="2.7" ry="1.8" fill="#8d8f92" stroke="#262626" stroke-width=".55" transform="rotate(53 61.7 17.1)"/><ellipse cx="13.4" cy="32.1" rx="2.1" ry="1.9" fill="#85878a" stroke="#262626" stroke-width=".55" transform="rotate(-63 13.4 32.1)"/><ellipse cx="21.3" cy="42.2" rx="3.7" ry="2.6" fill="#5f6062" stroke="#262626" stroke-width=".55" transform="rotate(-11 21.3 42.2)"/><ellipse cx="23.5" cy="49.7" rx="3.3" ry="2.5" fill="#57585a" stroke="#262626" stroke-width=".55" transform="rotate(-46 23.5 49.7)"/><ellipse cx="7.2" cy="35.3" rx="2.3" ry="1.9" fill="#57585a" stroke="#262626" stroke-width=".55" transform="rotate(0 7.2 35.3)"/><ellipse cx="58.1" cy="18.1" rx="3.1" ry="2.8" fill="#9a9c9f" stroke="#262626" stroke-width=".55" transform="rotate(13 58.1 18.1)"/><ellipse cx="72.3" cy="46.4" rx="2.1" ry="1.4" fill="#85878a" stroke="#262626" stroke-width=".55" transform="rotate(-51 72.3 46.4)"/><ellipse cx="33.2" cy="2.1" rx="3.6" ry="2.3" fill="#6f7072" stroke="#262626" stroke-width=".55" transform="rotate(57 33.2 2.1)"/><ellipse cx="43.6" cy="13.4" rx="2.2" ry="2.0" fill="#57585a" stroke="#262626" stroke-width=".55" transform="rotate(-58 43.6 13.4)"/><ellipse cx="73.1" cy="8.2" rx="2.1" ry="1.8" fill="#5f6062" stroke="#262626" stroke-width=".55" transform="rotate(-66 73.1 8.2)"/><ellipse cx="73.1" cy="-0.2" rx="2.7" ry="2.3" fill="#a4a6a9" stroke="#262626" stroke-width=".55" transform="rotate(-16 73.1 -0.2)"/><ellipse cx="2.6" cy="1.5" rx="3.3" ry="3.1" fill="#a4a6a9" stroke="#262626" stroke-width=".55" transform="rotate(-25 2.6 1.5)"/><ellipse cx="57.5" cy="25.9" rx="2.8" ry="2.5" fill="#8d8f92" stroke="#262626" stroke-width=".55" transform="rotate(26 57.5 25.9)"/><ellipse cx="54.6" cy="26.7" rx="2.9" ry="2.6" fill="#6a6c6f" stroke="#262626" stroke-width=".55" transform="rotate(-54 54.6 26.7)"/><ellipse cx="15.9" cy="21.8" rx="3.3" ry="2.9" fill="#9a9c9f" stroke="#262626" stroke-width=".55" transform="rotate(41 15.9 21.8)"/><ellipse cx="17.7" cy="27.4" rx="3.5" ry="2.9" fill="#9a9c9f" stroke="#262626" stroke-width=".55" transform="rotate(-33 17.7 27.4)"/><ellipse cx="43.4" cy="36.6" rx="2.9" ry="2.6" fill="#5f6062" stroke="#262626" stroke-width=".55" transform="rotate(-45 43.4 36.6)"/><ellipse cx="44.2" cy="30.9" rx="3.4" ry="2.7" fill="#6f7072" stroke="#262626" stroke-width=".55" transform="rotate(31 44.2 30.9)"/><ellipse cx="3.5" cy="47.0" rx="2.9" ry="2.3" fill="#9a9c9f" stroke="#262626" stroke-width=".55" transform="rotate(41 3.5 47.0)"/><ellipse cx="45.4" cy="0.9" rx="2.6" ry="2.2" fill="#8d8f92" stroke="#262626" stroke-width=".55" transform="rotate(45 45.4 0.9)"/><ellipse cx="57.3" cy="39.3" rx="2.7" ry="2.3" fill="#6a6c6f" stroke="#262626" stroke-width=".55" transform="rotate(1 57.3 39.3)"/><ellipse cx="17.4" cy="6.6" rx="3.2" ry="2.8" fill="#6f7072" stroke="#262626" stroke-width=".55" transform="rotate(40 17.4 6.6)"/><ellipse cx="22.0" cy="23.2" rx="3.2" ry="2.7" fill="#5f6062" stroke="#262626" stroke-width=".55" transform="rotate(64 22.0 23.2)"/><ellipse cx="35.2" cy="39.1" rx="3.8" ry="2.5" fill="#6f7072" stroke="#262626" stroke-width=".55" transform="rotate(-6 35.2 39.1)"/><ellipse cx="-1.7" cy="20.1" rx="2.8" ry="1.8" fill="#a4a6a9" stroke="#262626" stroke-width=".55" transform="rotate(8 -1.7 20.1)"/><ellipse cx="30.3" cy="2.1" rx="1.8" ry="1.7" fill="#7e8083" stroke="#262626" stroke-width=".55" transform="rotate(37 30.3 2.1)"/><ellipse cx="15.5" cy="11.7" rx="2.9" ry="2.0" fill="#9a9c9f" stroke="#262626" stroke-width=".55" transform="rotate(-5 15.5 11.7)"/><ellipse cx="25.7" cy="16.2" rx="3.8" ry="3.1" fill="#6a6c6f" stroke="#262626" stroke-width=".55" transform="rotate(-64 25.7 16.2)"/><ellipse cx="42.5" cy="51.7" rx="3.2" ry="2.6" fill="#7e8083" stroke="#262626" stroke-width=".55" transform="rotate(58 42.5 51.7)"/><ellipse cx="68.2" cy="7.6" rx="3.5" ry="3.3" fill="#6a6c6f" stroke="#262626" stroke-width=".55" transform="rotate(-40 68.2 7.6)"/><ellipse cx="57.4" cy="9.6" rx="2.4" ry="1.7" fill="#5f6062" stroke="#262626" stroke-width=".55" transform="rotate(7 57.4 9.6)"/><ellipse cx="34.5" cy="19.6" rx="2.9" ry="2.6" fill="#a4a6a9" stroke="#262626" stroke-width=".55" transform="rotate(-4 34.5 19.6)"/><ellipse cx="73.5" cy="34.7" rx="3.5" ry="2.4" fill="#85878a" stroke="#262626" stroke-width=".55" transform="rotate(-16 73.5 34.7)"/><ellipse cx="1.6" cy="12.9" rx="3.7" ry="3.0" fill="#57585a" stroke="#262626" stroke-width=".55" transform="rotate(3 1.6 12.9)"/><ellipse cx="36.9" cy="28.6" rx="3.1" ry="2.1" fill="#6f7072" stroke="#262626" stroke-width=".55" transform="rotate(-56 36.9 28.6)"/><ellipse cx="9.7" cy="48.6" rx="2.5" ry="2.1" fill="#85878a" stroke="#262626" stroke-width=".55" transform="rotate(31 9.7 48.6)"/><ellipse cx="-0.4" cy="15.4" rx="2.5" ry="1.6" fill="#77797c" stroke="#262626" stroke-width=".55" transform="rotate(54 -0.4 15.4)"/><ellipse cx="17.5" cy="45.4" rx="3.1" ry="2.2" fill="#a4a6a9" stroke="#262626" stroke-width=".55" transform="rotate(15 17.5 45.4)"/><ellipse cx="1.1" cy="6.1" rx="3.0" ry="1.9" fill="#6a6c6f" stroke="#262626" stroke-width=".55" transform="rotate(-26 1.1 6.1)"/><ellipse cx="34.4" cy="35.5" rx="2.8" ry="2.2" fill="#a4a6a9" stroke="#262626" stroke-width=".55" transform="rotate(-26 34.4 35.5)"/><ellipse cx="48.6" cy="5.9" rx="2.1" ry="1.5" fill="#6a6c6f" stroke="#262626" stroke-width=".55" transform="rotate(30 48.6 5.9)"/><ellipse cx="8.4" cy="25.9" rx="2.4" ry="1.6" fill="#7e8083" stroke="#262626" stroke-width=".55" transform="rotate(-18 8.4 25.9)"/><ellipse cx="14.4" cy="0.2" rx="1.8" ry="1.5" fill="#57585a" stroke="#262626" stroke-width=".55" transform="rotate(9 14.4 0.2)"/><ellipse cx="48.2" cy="1.6" rx="3.5" ry="2.8" fill="#85878a" stroke="#262626" stroke-width=".55" transform="rotate(-21 48.2 1.6)"/><ellipse cx="70.6" cy="44.9" rx="2.2" ry="1.8" fill="#6a6c6f" stroke="#262626" stroke-width=".55" transform="rotate(-57 70.6 44.9)"/><ellipse cx="7.1" cy="24.6" rx="2.7" ry="2.5" fill="#57585a" stroke="#262626" stroke-width=".55" transform="rotate(-30 7.1 24.6)"/><ellipse cx="14.8" cy="48.0" rx="2.1" ry="1.9" fill="#9a9c9f" stroke="#262626" stroke-width=".55" transform="rotate(-21 14.8 48.0)"/><ellipse cx="37.6" cy="38.1" rx="3.6" ry="3.2" fill="#57585a" stroke="#262626" stroke-width=".55" transform="rotate(-3 37.6 38.1)"/><ellipse cx="51.3" cy="27.9" rx="3.2" ry="2.0" fill="#77797c" stroke="#262626" stroke-width=".55" transform="rotate(-15 51.3 27.9)"/><ellipse cx="67.1" cy="47.3" rx="2.3" ry="1.7" fill="#57585a" stroke="#262626" stroke-width=".55" transform="rotate(49 67.1 47.3)"/><ellipse cx="33.6" cy="15.6" rx="2.2" ry="1.4" fill="#77797c" stroke="#262626" stroke-width=".55" transform="rotate(-21 33.6 15.6)"/><ellipse cx="41.0" cy="12.1" rx="3.1" ry="2.1" fill="#7e8083" stroke="#262626" stroke-width=".55" transform="rotate(-4 41.0 12.1)"/><ellipse cx="23.9" cy="46.5" rx="1.8" ry="1.5" fill="#85878a" stroke="#262626" stroke-width=".55" transform="rotate(-40 23.9 46.5)"/><ellipse cx="45.7" cy="31.5" rx="2.6" ry="1.9" fill="#a4a6a9" stroke="#262626" stroke-width=".55" transform="rotate(-31 45.7 31.5)"/><ellipse cx="64.9" cy="18.6" rx="3.6" ry="2.3" fill="#8d8f92" stroke="#262626" stroke-width=".55" transform="rotate(-51 64.9 18.6)"/><ellipse cx="18.7" cy="24.7" rx="2.7" ry="1.7" fill="#57585a" stroke="#262626" stroke-width=".55" transform="rotate(15 18.7 24.7)"/><ellipse cx="15.4" cy="34.7" rx="2.2" ry="1.4" fill="#6a6c6f" stroke="#262626" stroke-width=".55" transform="rotate(6 15.4 34.7)"/><ellipse cx="-1.7" cy="27.5" rx="3.5" ry="3.0" fill="#8d8f92" stroke="#262626" stroke-width=".55" transform="rotate(-59 -1.7 27.5)"/><ellipse cx="65.2" cy="35.3" rx="3.4" ry="2.4" fill="#6f7072" stroke="#262626" stroke-width=".55" transform="rotate(-55 65.2 35.3)"/><ellipse cx="21.8" cy="36.7" rx="3.2" ry="2.7" fill="#5f6062" stroke="#262626" stroke-width=".55" transform="rotate(65 21.8 36.7)"/><ellipse cx="10.1" cy="31.6" rx="2.7" ry="2.2" fill="#57585a" stroke="#262626" stroke-width=".55" transform="rotate(-18 10.1 31.6)"/><ellipse cx="25.9" cy="34.1" rx="2.7" ry="2.3" fill="#5f6062" stroke="#262626" stroke-width=".55" transform="rotate(-19 25.9 34.1)"/><ellipse cx="67.7" cy="37.8" rx="3.5" ry="3.4" fill="#57585a" stroke="#262626" stroke-width=".55" transform="rotate(44 67.7 37.8)"/><ellipse cx="6.6" cy="22.4" rx="3.3" ry="2.6" fill="#6a6c6f" stroke="#262626" stroke-width=".55" transform="rotate(-47 6.6 22.4)"/><ellipse cx="64.1" cy="0.9" rx="2.2" ry="1.8" fill="#6a6c6f" stroke="#262626" stroke-width=".55" transform="rotate(42 64.1 0.9)"/><ellipse cx="17.2" cy="32.3" rx="2.5" ry="2.1" fill="#9a9c9f" stroke="#262626" stroke-width=".55" transform="rotate(-44 17.2 32.3)"/><ellipse cx="62.0" cy="42.7" rx="2.9" ry="2.2" fill="#7e8083" stroke="#262626" stroke-width=".55" transform="rotate(29 62.0 42.7)"/><ellipse cx="54.3" cy="12.5" rx="2.0" ry="1.4" fill="#57585a" stroke="#262626" stroke-width=".55" transform="rotate(17 54.3 12.5)"/><ellipse cx="15.6" cy="8.0" rx="1.7" ry="1.4" fill="#5f6062" stroke="#262626" stroke-width=".55" transform="rotate(62 15.6 8.0)"/><ellipse cx="18.4" cy="12.6" rx="2.2" ry="1.9" fill="#5f6062" stroke="#262626" stroke-width=".55" transform="rotate(-16 18.4 12.6)"/><ellipse cx="1.7" cy="36.5" rx="1.9" ry="1.2" fill="#8d8f92" stroke="#262626" stroke-width=".55" transform="rotate(-30 1.7 36.5)"/><ellipse cx="73.5" cy="4.5" rx="2.4" ry="1.5" fill="#a4a6a9" stroke="#262626" stroke-width=".55" transform="rotate(6 73.5 4.5)"/><ellipse cx="11.0" cy="1.6" rx="2.6" ry="2.4" fill="#9a9c9f" stroke="#262626" stroke-width=".55" transform="rotate(21 11.0 1.6)"/><ellipse cx="27.8" cy="31.4" rx="3.3" ry="3.1" fill="#9a9c9f" stroke="#262626" stroke-width=".55" transform="rotate(-15 27.8 31.4)"/><ellipse cx="39.5" cy="41.2" rx="2.0" ry="1.4" fill="#57585a" stroke="#262626" stroke-width=".55" transform="rotate(-55 39.5 41.2)"/><ellipse cx="64.9" cy="21.4" rx="2.0" ry="1.8" fill="#7e8083" stroke="#262626" stroke-width=".55" transform="rotate(-32 64.9 21.4)"/><ellipse cx="8.9" cy="31.8" rx="2.3" ry="1.6" fill="#77797c" stroke="#262626" stroke-width=".55" transform="rotate(-2 8.9 31.8)"/><ellipse cx="39.9" cy="28.2" rx="2.0" ry="1.3" fill="#85878a" stroke="#262626" stroke-width=".55" transform="rotate(36 39.9 28.2)"/><ellipse cx="-1.7" cy="16.2" rx="2.0" ry="1.8" fill="#6a6c6f" stroke="#262626" stroke-width=".55" transform="rotate(69 -1.7 16.2)"/><ellipse cx="34.8" cy="20.4" rx="3.4" ry="2.5" fill="#8d8f92" stroke="#262626" stroke-width=".55" transform="rotate(-62 34.8 20.4)"/><ellipse cx="44.9" cy="42.7" rx="2.2" ry="1.5" fill="#9a9c9f" stroke="#262626" stroke-width=".55" transform="rotate(-29 44.9 42.7)"/><ellipse cx="73.6" cy="21.9" rx="3.5" ry="3.0" fill="#6f7072" stroke="#262626" stroke-width=".55" transform="rotate(-45 73.6 21.9)"/><ellipse cx="69.8" cy="27.1" rx="3.1" ry="2.2" fill="#8d8f92" stroke="#262626" stroke-width=".55" transform="rotate(-67 69.8 27.1)"/><ellipse cx="21.6" cy="25.8" rx="1.7" ry="1.2" fill="#6f7072" stroke="#262626" stroke-width=".55" transform="rotate(64 21.6 25.8)"/><ellipse cx="56.3" cy="12.3" rx="2.2" ry="2.0" fill="#57585a" stroke="#262626" stroke-width=".55" transform="rotate(-1 56.3 12.3)"/><ellipse cx="59.0" cy="42.7" rx="3.3" ry="3.1" fill="#a4a6a9" stroke="#262626" stroke-width=".55" transform="rotate(-56 59.0 42.7)"/><ellipse cx="28.6" cy="36.1" rx="2.2" ry="2.0" fill="#7e8083" stroke="#262626" stroke-width=".55" transform="rotate(-67 28.6 36.1)"/><ellipse cx="8.7" cy="15.5" rx="3.2" ry="2.5" fill="#77797c" stroke="#262626" stroke-width=".55" transform="rotate(-31 8.7 15.5)"/><ellipse cx="45.6" cy="22.3" rx="2.4" ry="1.5" fill="#7e8083" stroke="#262626" stroke-width=".55" transform="rotate(21 45.6 22.3)"/><ellipse cx="5.2" cy="16.1" rx="3.3" ry="2.2" fill="#8d8f92" stroke="#262626" stroke-width=".55" transform="rotate(34 5.2 16.1)"/><ellipse cx="21.1" cy="9.1" rx="2.4" ry="1.6" fill="#5f6062" stroke="#262626" stroke-width=".55" transform="rotate(-18 21.1 9.1)"/><ellipse cx="30.7" cy="-1.5" rx="2.8" ry="2.1" fill="#8d8f92" stroke="#262626" stroke-width=".55" transform="rotate(-25 30.7 -1.5)"/><ellipse cx="61.8" cy="39.1" rx="1.7" ry="1.2" fill="#7e8083" stroke="#262626" stroke-width=".55" transform="rotate(-61 61.8 39.1)"/><ellipse cx="6.2" cy="51.3" rx="2.6" ry="2.4" fill="#6a6c6f" stroke="#262626" stroke-width=".55" transform="rotate(-39 6.2 51.3)"/><ellipse cx="57.3" cy="45.9" rx="3.4" ry="2.2" fill="#77797c" stroke="#262626" stroke-width=".55" transform="rotate(-15 57.3 45.9)"/><ellipse cx="65.0" cy="40.0" rx="2.8" ry="1.7" fill="#6a6c6f" stroke="#262626" stroke-width=".55" transform="rotate(32 65.0 40.0)"/><ellipse cx="67.2" cy="1.0" rx="3.0" ry="2.2" fill="#6a6c6f" stroke="#262626" stroke-width=".55" transform="rotate(-8 67.2 1.0)"/><ellipse cx="36.4" cy="28.7" rx="1.9" ry="1.7" fill="#a4a6a9" stroke="#262626" stroke-width=".55" transform="rotate(27 36.4 28.7)"/><ellipse cx="31.1" cy="23.2" rx="3.5" ry="2.7" fill="#8d8f92" stroke="#262626" stroke-width=".55" transform="rotate(-17 31.1 23.2)"/><ellipse cx="41.5" cy="25.8" rx="1.8" ry="1.5" fill="#7e8083" stroke="#262626" stroke-width=".55" transform="rotate(-7 41.5 25.8)"/><ellipse cx="1.5" cy="0.9" rx="2.4" ry="1.9" fill="#57585a" stroke="#262626" stroke-width=".55" transform="rotate(-24 1.5 0.9)"/><ellipse cx="54.1" cy="14.9" rx="3.2" ry="3.1" fill="#5f6062" stroke="#262626" stroke-width=".55" transform="rotate(-14 54.1 14.9)"/><ellipse cx="55.2" cy="46.5" rx="1.9" ry="1.3" fill="#5f6062" stroke="#262626" stroke-width=".55" transform="rotate(59 55.2 46.5)"/><ellipse cx="61.0" cy="41.1" rx="2.8" ry="2.6" fill="#6f7072" stroke="#262626" stroke-width=".55" transform="rotate(-61 61.0 41.1)"/><ellipse cx="52.1" cy="11.5" rx="3.4" ry="2.6" fill="#6a6c6f" stroke="#262626" stroke-width=".55" transform="rotate(5 52.1 11.5)"/><ellipse cx="12.9" cy="13.1" rx="3.1" ry="2.0" fill="#a4a6a9" stroke="#262626" stroke-width=".55" transform="rotate(8 12.9 13.1)"/><ellipse cx="64.6" cy="1.9" rx="2.7" ry="1.8" fill="#85878a" stroke="#262626" stroke-width=".55" transform="rotate(52 64.6 1.9)"/><ellipse cx="58.6" cy="6.2" rx="2.5" ry="1.6" fill="#77797c" stroke="#262626" stroke-width=".55" transform="rotate(-65 58.6 6.2)"/><ellipse cx="70.6" cy="9.9" rx="2.3" ry="1.7" fill="#6f7072" stroke="#262626" stroke-width=".55" transform="rotate(16 70.6 9.9)"/><ellipse cx="62.5" cy="31.3" rx="3.6" ry="2.3" fill="#9a9c9f" stroke="#262626" stroke-width=".55" transform="rotate(68 62.5 31.3)"/><ellipse cx="38.5" cy="15.1" rx="3.7" ry="3.5" fill="#6a6c6f" stroke="#262626" stroke-width=".55" transform="rotate(8 38.5 15.1)"/><ellipse cx="26.7" cy="42.1" rx="3.2" ry="2.8" fill="#7e8083" stroke="#262626" stroke-width=".55" transform="rotate(62 26.7 42.1)"/><ellipse cx="13.9" cy="9.3" rx="3.3" ry="2.2" fill="#6f7072" stroke="#262626" stroke-width=".55" transform="rotate(11 13.9 9.3)"/><ellipse cx="7.8" cy="4.3" rx="3.7" ry="3.0" fill="#9a9c9f" stroke="#262626" stroke-width=".55" transform="rotate(-20 7.8 4.3)"/><ellipse cx="-1.4" cy="1.7" rx="2.1" ry="1.8" fill="#6a6c6f" stroke="#262626" stroke-width=".55" transform="rotate(52 -1.4 1.7)"/><ellipse cx="13.2" cy="1.9" rx="2.3" ry="1.7" fill="#57585a" stroke="#262626" stroke-width=".55" transform="rotate(16 13.2 1.9)"/><ellipse cx="32.7" cy="25.4" rx="3.7" ry="2.7" fill="#9a9c9f" stroke="#262626" stroke-width=".55" transform="rotate(29 32.7 25.4)"/><ellipse cx="35.4" cy="4.3" rx="2.0" ry="1.8" fill="#85878a" stroke="#262626" stroke-width=".55" transform="rotate(63 35.4 4.3)"/><ellipse cx="49.4" cy="22.6" rx="3.7" ry="2.7" fill="#7e8083" stroke="#262626" stroke-width=".55" transform="rotate(34 49.4 22.6)"/><ellipse cx="14.7" cy="32.5" rx="2.5" ry="1.8" fill="#57585a" stroke="#262626" stroke-width=".55" transform="rotate(12 14.7 32.5)"/><ellipse cx="20.3" cy="35.5" rx="3.1" ry="2.2" fill="#5f6062" stroke="#262626" stroke-width=".55" transform="rotate(-12 20.3 35.5)"/><ellipse cx="43.1" cy="44.8" rx="2.5" ry="1.8" fill="#7e8083" stroke="#262626" stroke-width=".55" transform="rotate(-56 43.1 44.8)"/><ellipse cx="5.9" cy="33.5" rx="2.7" ry="1.8" fill="#6f7072" stroke="#262626" stroke-width=".55" transform="rotate(41 5.9 33.5)"/><ellipse cx="26.5" cy="37.0" rx="3.1" ry="2.3" fill="#6f7072" stroke="#262626" stroke-width=".55" transform="rotate(56 26.5 37.0)"/><ellipse cx="48.8" cy="6.4" rx="1.9" ry="1.3" fill="#a4a6a9" stroke="#262626" stroke-width=".55" transform="rotate(1 48.8 6.4)"/><ellipse cx="49.0" cy="30.7" rx="3.7" ry="3.5" fill="#6a6c6f" stroke="#262626" stroke-width=".55" transform="rotate(69 49.0 30.7)"/><ellipse cx="30.9" cy="10.4" rx="2.8" ry="1.9" fill="#a4a6a9" stroke="#262626" stroke-width=".55" transform="rotate(-62 30.9 10.4)"/><ellipse cx="47.9" cy="40.7" rx="3.7" ry="2.9" fill="#a4a6a9" stroke="#262626" stroke-width=".55" transform="rotate(12 47.9 40.7)"/><ellipse cx="26.1" cy="5.7" rx="2.5" ry="2.2" fill="#5f6062" stroke="#262626" stroke-width=".55" transform="rotate(-58 26.1 5.7)"/><ellipse cx="70.8" cy="35.6" rx="3.4" ry="3.1" fill="#a4a6a9" stroke="#262626" stroke-width=".55" transform="rotate(23 70.8 35.6)"/><ellipse cx="57.0" cy="4.5" rx="2.7" ry="1.7" fill="#6f7072" stroke="#262626" stroke-width=".55" transform="rotate(50 57.0 4.5)"/><ellipse cx="6.3" cy="20.3" rx="2.9" ry="2.7" fill="#85878a" stroke="#262626" stroke-width=".55" transform="rotate(39 6.3 20.3)"/><ellipse cx="20.9" cy="25.4" rx="2.0" ry="1.6" fill="#85878a" stroke="#262626" stroke-width=".55" transform="rotate(-52 20.9 25.4)"/><ellipse cx="36.7" cy="14.7" rx="2.4" ry="1.7" fill="#a4a6a9" stroke="#262626" stroke-width=".55" transform="rotate(13 36.7 14.7)"/><ellipse cx="2.1" cy="9.8" rx="2.6" ry="2.1" fill="#85878a" stroke="#262626" stroke-width=".55" transform="rotate(-6 2.1 9.8)"/><ellipse cx="59.5" cy="25.2" rx="2.0" ry="1.6" fill="#7e8083" stroke="#262626" stroke-width=".55" transform="rotate(-46 59.5 25.2)"/><ellipse cx="44.5" cy="44.6" rx="3.7" ry="2.8" fill="#5f6062" stroke="#262626" stroke-width=".55" transform="rotate(-69 44.5 44.6)"/><ellipse cx="58.6" cy="3.9" rx="3.2" ry="2.4" fill="#7e8083" stroke="#262626" stroke-width=".55" transform="rotate(-29 58.6 3.9)"/><ellipse cx="0.2" cy="4.0" rx="2.3" ry="2.2" fill="#6f7072" stroke="#262626" stroke-width=".55" transform="rotate(20 0.2 4.0)"/><ellipse cx="27.6" cy="14.2" rx="2.2" ry="1.7" fill="#6a6c6f" stroke="#262626" stroke-width=".55" transform="rotate(22 27.6 14.2)"/><ellipse cx="23.0" cy="24.4" rx="3.1" ry="2.8" fill="#7e8083" stroke="#262626" stroke-width=".55" transform="rotate(63 23.0 24.4)"/><ellipse cx="72.6" cy="48.1" rx="1.9" ry="1.6" fill="#7e8083" stroke="#262626" stroke-width=".55" transform="rotate(-33 72.6 48.1)"/><ellipse cx="17.6" cy="17.9" rx="2.6" ry="2.0" fill="#6a6c6f" stroke="#262626" stroke-width=".55" transform="rotate(-20 17.6 17.9)"/><ellipse cx="23.4" cy="4.3" rx="2.4" ry="1.9" fill="#6a6c6f" stroke="#262626" stroke-width=".55" transform="rotate(-47 23.4 4.3)"/><ellipse cx="39.6" cy="19.6" rx="2.2" ry="1.4" fill="#77797c" stroke="#262626" stroke-width=".55" transform="rotate(-18 39.6 19.6)"/><ellipse cx="25.3" cy="49.4" rx="2.8" ry="2.2" fill="#77797c" stroke="#262626" stroke-width=".55" transform="rotate(33 25.3 49.4)"/><ellipse cx="28.9" cy="50.2" rx="1.7" ry="1.4" fill="#77797c" stroke="#262626" stroke-width=".55" transform="rotate(65 28.9 50.2)"/></g></svg>
<svg style="left:1175px;top:574px" width="72" height="50" viewBox="0 0 72 50"><defs><clipPath id="thO"><rect width="72" height="50" rx="4.500"/></clipPath></defs><g clip-path="url(#thO)"><defs><linearGradient id="os" x1="0" y1="0" x2="0" y2="1"><stop offset="0" stop-color="#155fc4"/><stop offset=".55" stop-color="#4f9be6"/><stop offset="1" stop-color="#bcd9f5"/></linearGradient>
<linearGradient id="ow" x1="0" y1="0" x2="0" y2="1"><stop offset="0" stop-color="#2366bd"/><stop offset=".45" stop-color="#15459f"/><stop offset="1" stop-color="#0b2670"/></linearGradient></defs>
<rect width="72" height="25.500" fill="url(#os)"/><rect y="25" width="72" height="25" fill="url(#ow)"/>
<ellipse cx="37" cy="17.800" rx="5.500" ry="2" fill="#fff" opacity=".95"/><ellipse cx="38" cy="16" rx="2.500" ry="1.800" fill="#fff"/>
<ellipse cx="62" cy="19.500" rx="10" ry="1.800" fill="#e4f0fb" opacity=".75"/><ellipse cx="12" cy="22.500" rx="13" ry="1.500" fill="#d8e8f8" opacity=".6"/><ellipse cx="38" cy="23.500" rx="30" ry="1.300" fill="#d8e8f8" opacity=".5"/><ellipse cx="20" cy="7" rx="3" ry=".8" fill="#cfe3f8" opacity=".7"/><ellipse cx="54" cy="6" rx="3" ry=".8" fill="#cfe3f8" opacity=".7"/></g></svg>
<svg style="left:1258px;top:574px" width="72" height="50" viewBox="0 0 72 50"><defs><clipPath id="thM"><rect width="72" height="50" rx="4.500"/></clipPath></defs><g clip-path="url(#thM)"><defs><linearGradient id="ms" x1="0" y1="0" x2="1" y2="1"><stop offset="0" stop-color="#0b6fbd"/><stop offset="1" stop-color="#1f80c8"/></linearGradient></defs><rect width="72" height="50" fill="url(#ms)"/>
<path d="M0 29L8 22L15 14L24 7.500L31.600 3L36 9L44 18L52 24L60 29L72 34V50H0z" fill="#d8d3cf"/>
<path d="M0 31L9 23.500L17 17L24 12.500L29 14L35 19.500L41.500 25L39.500 35L36 50H0z" fill="#245f8f"/>
<path d="M2 40L14 30L22 32L30 42L33 50H0z" fill="#1d5583" opacity=".8"/>
<path d="M15 14.500L24 7.500L31.600 3L35.500 8.500L38 14L33 12L28.500 13.500L24 12.500L19 15.500z" fill="#f2f0ee"/>
<path d="M41.500 25L46 22L52 24L60 29L72 34V38L60 35L50 34z" fill="#ece9e6"/>
<path d="M39.500 35L44 30L50 34L56 42L58 50H36z" fill="#bab3ad"/><path d="M56 42L64 40L72 43V50H58z" fill="#e6ecf2"/><path d="M50 34L60 35L72 38V43L64 40L56 42z" fill="#c9c2bc"/></g></svg>
<svg style="left:1341.5px;top:574px" width="72" height="50" viewBox="0 0 72 50"><defs><clipPath id="thL"><rect width="72" height="50" rx="4.500"/></clipPath></defs><g clip-path="url(#thL)"><rect width="72" height="50" fill="#b8c3c7"/>
<path d="M0 12.500C6 10.500 14 9.500 22 9C30 8.500 36 9.500 42 11.500C46 13 50 12.500 54 11.500C60 10.500 66 11.500 72 13V32H0z" fill="#6d889b"/>
<rect y="29.500" width="72" height="21" fill="#8c9eab"/><rect y="40" width="72" height="10" fill="#95a5b1" opacity=".6"/>
<path d="M0 14L2 16L4 14L6 17L8 15L10 18L12 16L14 19L16 18L18 21L20 20L22 23L24 25L26 28L28 30L33 31.500L33 32.500H0z" fill="#3e5762"/><path d="M0 30.500H32L30 33H0z" fill="#5d7482"/></g></svg>
<svg style="left:1424px;top:574px" width="72" height="50" viewBox="0 0 72 50"><defs><clipPath id="thG"><rect width="72" height="50" rx="4.500"/></clipPath></defs><g clip-path="url(#thG)"><defs><linearGradient id="gs" x1="0" y1="0" x2="0" y2="1"><stop offset="0" stop-color="#2f74d4"/><stop offset=".5" stop-color="#8fb6e4"/><stop offset=".82" stop-color="#f6dca6"/><stop offset="1" stop-color="#f3b55c"/></linearGradient></defs>
<rect width="72" height="50" fill="#7d97ab"/><rect width="72" height="24" fill="url(#gs)"/>
<path d="M0 22.500C8 21.500 14 22 20 21C28 20.500 36 21 44 22L56 23.500V25.500H0z" fill="#7d6b5f"/>
<rect y="25" width="72" height="26" fill="#7f9bb0"/>
<path d="M0 25.500H46L38 31H0z" fill="#a9bccb" opacity=".7"/>
<path d="M72 23L62 25.500L54 28.500L46 33L38 39L30 45L22 50H72z" fill="#b4702c"/>
<path d="M72 23L63 26L57 31L61 37L67 43L72 46z" fill="#dc8e2e"/><path d="M40 39L50 34.500L57 40L50 50H26z" fill="#77702f" opacity=".85"/><path d="M50 30L58 27L62 31L56 35z" fill="#e6b45a"/>
<path d="M46 30L40 33.500L32 38.500L22 44.500L12 50H3L15 43.500L27 36.500L38 31z" fill="#f2f4f7"/>
<path d="M14 0H72V5.500C68 7.500 64 5.500 60 6.500C56 8 52 5.500 48 6.500C44 5 40 4 36 5C32 7 28 4 24 5C20 6.500 17 5 14 0z" fill="#4a2a17"/>
<path d="M34 0H72V3C64 5 56 2 48 4C42 3 38 2 34 0z" fill="#8a4a1c"/>
<path d="M49 17.500h1.200v11h-1.200z" fill="#c4482a"/><path d="M50 18.500L60 24.500" stroke="#c4482a" stroke-width=".6"/><path d="M67 18C69 13 71 13 72 14V24H69z" fill="#5a3517"/></g></svg>
<div style="left:1156px;top:654px;width:355px;height:1px;background:#e8eaed"></div>
<span class="t" style="top:679.00px;font-size:13.5px;line-height:13.5px;color:#5f6368;letter-spacing:0.609px;left:1174.30px;">INBOX TYPE</span>
<div style="left:1177.1px;top:736.0px;width:20.800px;height:20.800px;border-radius:50%;border:2px solid #70777f"></div>
<div style="left:1177.1px;top:820.8000000000001px;width:20.800px;height:20.800px;border-radius:50%;border:2px solid #70777f"></div>
<div style="left:1177.1px;top:909.5px;width:20.800px;height:20.800px;border-radius:50%;border:2px solid #70777f"></div>
<div style="left:1177.1px;top:998.0px;width:20.800px;height:20.800px;border-radius:50%;border:2px solid #70777f"></div>
<span class="t" style="top:722.00px;font-size:17px;line-height:17px;color:#202124;letter-spacing:0.518px;left:1219.75px;">Default</span>
<span class="t" style="top:751.00px;font-size:17.5px;line-height:17.5px;color:#1a6df0;letter-spacing:0.790px;left:1220.75px;">Customize</span>
<span class="t" style="top:824.00px;font-size:17px;line-height:17px;color:#202124;letter-spacing:0.747px;left:1219.75px;">Important first</span>
<span class="t" style="top:912.00px;font-size:17px;line-height:17px;color:#202124;letter-spacing:0.428px;left:1219.75px;">Unread first</span>
<div style="left:1405px;top:715px;width:90px;height:62px;border:1px solid #dadce0;border-radius:5px;background:#fff"><div style="left:0;top:12px;width:88px;height:1px;background:#dadce0"></div><div style="left:0;top:24.3px;width:88px;height:1px;background:#dadce0"></div><div style="left:0;top:36.7px;width:88px;height:1px;background:#dadce0"></div><div style="left:0;top:49px;width:88px;height:1px;background:#dadce0"></div></div>
<div style="left:1405px;top:796px;width:90px;height:68.5px;border:1px solid #dadce0;border-radius:5px;background:#fff"><div style="left:3.700px;top:4.3px;width:15px;height:3.800px;border-radius:2px;background:#bdc1c6"></div><div style="left:0;top:33px;width:88px;height:1px;background:#dadce0"></div><div style="left:3.700px;top:38px;width:15px;height:3.800px;border-radius:2px;background:#bdc1c6"></div><svg style="left:57.700px;top:7.300px" width="24" height="24" viewBox="0 0 24 24" fill="#f29900"><path d="M15 19H3l4.500-7L3 5h12c.65 0 1.260.31 1.630.84L21 12l-4.370 6.160c-.37.52-.98.84-1.630.84zm-8.500-2H15l3.500-5L15 7H6.500l3.250 5-3.250 5z"/></svg></div>
<div style="left:1405px;top:885px;width:90px;height:68.5px;border:1px solid #dadce0;border-radius:5px;background:#fff"><div style="left:3.700px;top:4.3px;width:15px;height:3.800px;border-radius:2px;background:#bdc1c6"></div><div style="left:0;top:33px;width:88px;height:1px;background:#dadce0"></div><div style="left:3.700px;top:38px;width:15px;height:3.800px;border-radius:2px;background:#bdc1c6"></div><svg style="left:58.100px;top:7.400px" width="23" height="23" viewBox="0 0 24 24" fill="#1a73e8"><path d="M20 4H4c-1.100 0-1.990.9-1.990 2L2 18c0 1.100.9 2 2 2h16c1.100 0 2-.9 2-2V6c0-1.100-.9-2-2-2zm0 14H4V8l8 5 8-5v10zm-8-7L4 6h16l-8 5z"/></svg></div>
<div style="left:1405px;top:974px;width:90px;height:68.5px;border:1px solid #dadce0;border-radius:5px;background:#fff"><div style="left:3.700px;top:4.3px;width:15px;height:3.800px;border-radius:2px;background:#bdc1c6"></div><div style="left:0;top:33px;width:88px;height:1px;background:#dadce0"></div><div style="left:3.700px;top:38px;width:15px;height:3.800px;border-radius:2px;background:#bdc1c6"></div><svg style="left:58.100px;top:5.700px" width="23" height="23" viewBox="0 0 24 24" fill="#f4b400"><path d="M22 9.240l-7.190-.62L12 2 9.190 8.630 2 9.240l5.460 4.730L5.820 21 12 17.270 18.180 21l-1.630-7.030L22 9.240zM12 15.400l-3.760 2.270 1-4.280-3.320-2.880 4.380-.38L12 6.100l1.710 4.040 4.380.38-3.320 2.880 1 4.280L12 15.400z"/></svg></div>
</aside>
<aside class="apps">
<div style="left:1530px;top:81px;width:1px;height:919px;background:#e4e8eb"></div>
<svg style="left:1555.500px;top:102.300px" width="21" height="20" viewBox="0 0 21 20"><rect x="1.500" y=".2" width="18" height="3.500" rx=".8" fill="#c9cccf"/><path d="M.3 3.400H20.700L19.800 12H1.200z" fill="#3367d6"/><path d="M1.200 11.500H19.800L20.200 19A1 1 0 0 1 19.200 19.900H1.800A1 1 0 0 1 .8 19z" fill="#4285f4"/></svg>
<span class="t" style="top:110.00px;font-size:11.5px;line-height:11.5px;color:#fff;letter-spacing:-0.896px;left:1560.50px;">31</span>
<svg style="left:1556.250px;top:172.500px" width="20" height="20" viewBox="0 0 20 20"><path d="M1.500 0h17A1.500 1.500 0 0 1 20 1.500V14.500L14.500 20H1.500A1.500 1.500 0 0 1 0 18.500V1.500A1.500 1.500 0 0 1 1.500 0z" fill="#f9bc15"/><path d="M20 14.500L14.500 20V16A1.500 1.500 0 0 1 16 14.500z" fill="#fde8a8"/>
<path d="M10 3.800A4 4 0 0 0 7.700 11.100V12.800H12.300V11.100A4 4 0 0 0 10 3.800z" fill="none" stroke="#fff" stroke-width="1.100"/><rect x="8" y="14.200" width="4" height="1.200" fill="#fff"/></svg>
<svg style="left:1554.800px;top:241px" width="23" height="23" viewBox="0 0 23 23"><circle cx="11.500" cy="11.500" r="11.500" fill="#4285f4"/><path d="M12 23A11.500 11.500 0 0 0 21 6L9 18z" fill="#3b78e7" opacity=".6"/><path d="M9.400 16.200L17.400 8.400" stroke="#fff" stroke-width="3.400" stroke-linecap="round"/><circle cx="5.400" cy="11.700" r="2.500" fill="#fbbc04"/></svg>
<div style="left:1554px;top:310px;width:24.5px;height:1px;background:#dadce0"></div>
<svg style="left:1557.300px;top:358.400px" width="18" height="18" viewBox="0 0 18 18"><path d="M8 0h2v8h8v2h-8v8H8v-8H0V8h8z" fill="#5f6368"/></svg>
</aside>
</div></body></html>
